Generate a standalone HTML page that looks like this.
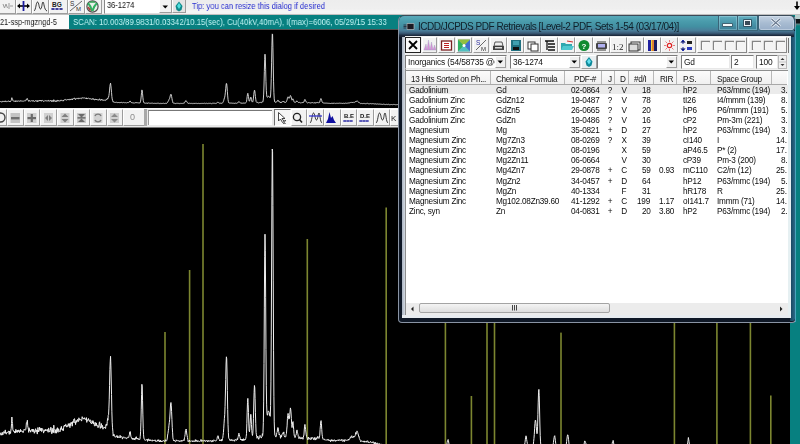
<!DOCTYPE html><html><head><meta charset='utf-8'><style>
*{margin:0;padding:0;box-sizing:border-box}
html,body{width:800px;height:444px;overflow:hidden;background:#000;font-family:"Liberation Sans",sans-serif}
.a{position:absolute}
.t{position:absolute;will-change:transform;white-space:nowrap;font-size:8.2px;line-height:10px;color:#111;letter-spacing:-0.22px}
.b{position:absolute;background:#f2f2f2;border-right:1px solid #9c9c9c;border-bottom:1px solid #9c9c9c;border-left:1px solid #fff;border-top:1px solid #fff}
svg{position:absolute;overflow:visible}
</style></head><body><div class='a' style='left:0;top:0;width:800px;height:15px;background:linear-gradient(180deg,#ededed 0%,#efefef 60%,#f5f5f5 75%,#f3f3f3 92%,#9a9a9a 100%)'></div><div class='b' style='left:-1px;top:-1px;width:17px;height:15px'></div><div class='b' style='left:16px;top:-1px;width:16px;height:15px'></div><div class='b' style='left:32px;top:-1px;width:17px;height:15px'></div><div class='b' style='left:49px;top:-1px;width:19px;height:15px'></div><div class='b' style='left:68px;top:-1px;width:17px;height:15px'></div><div class='b' style='left:85px;top:-1px;width:17px;height:15px'></div><svg style='left:0;top:-1.5px' width='110' height='15'>
<path d='M3,5 L4.5,9 L6,5 L7.5,9 M9,4 L9,10 M10,7 L13,7' stroke='#9a9a9a' stroke-width='1' fill='none'/>
<path d='M18,7 L29,7' stroke='#000' stroke-width='1.6'/><path d='M17,7 L20,4.5 L20,9.5 Z M30,7 L27,4.5 L27,9.5Z' fill='#000'/>
<path d='M23.5,2 L23.5,12' stroke='#1a1aa0' stroke-width='1.8'/>
<path d='M34,12 C36,11 36,3 37.5,3 C39,3 39,10 40.5,10 C42,10 42,3 43,3 C44,3 44,11 47,12' stroke='#222' stroke-width='0.9' fill='none'/>
<text x='52' y='7.5' font-family='Liberation Sans' font-size='6.5' font-weight='bold' fill='#222'>BG</text>
<path d='M51,10 L63,10' stroke='#2020a0' stroke-width='1'/><circle cx='53' cy='10' r='0.9' fill='#202080'/><circle cx='57' cy='10' r='0.9' fill='#202080'/><circle cx='61' cy='10' r='0.9' fill='#202080'/>
<text x='70' y='7' font-family='Liberation Sans' font-size='6.5' fill='#333'>S</text><path d='M70,12 L82,2' stroke='#555' stroke-width='0.9'/>
<text x='76' y='12' font-family='Liberation Sans' font-size='6' fill='#333'>M</text>
<circle cx='92.5' cy='7.5' r='5.6' fill='#e8f0e8' stroke='#505050' stroke-width='1.2'/><path d='M88,4 C90,6 91,8 92,12 M97,4 C95,6 93,9 92.5,12' stroke='#30b060' stroke-width='2'/><path d='M88,8 L90.5,11.5' stroke='#b04040' stroke-width='1.6'/><path d='M90,3 L95,3' stroke='#30a050' stroke-width='1.5'/>
</svg><div class='a' style='left:104px;top:0;width:68px;height:14px;background:#fff;border-left:1px solid #888;border-bottom:1px solid #ddd'></div><div class='t' style='left:107px;top:0px;font-size:8.6px;letter-spacing:0;transform:scaleX(0.866);transform-origin:0 0;color:#111'>36-1274</div><div class='b' style='left:159px;top:-1px;width:13px;height:14px'></div><svg style='left:159px;top:0' width='13' height='14'><path d='M3.5,5.5 L9,5.5 L6.25,8.5Z' fill='#000'/></svg><div class='b' style='left:172px;top:-1px;width:14px;height:14px;background:#e4e4e4'></div><svg style='left:172px;top:0' width='14' height='14'><path d='M7,1.5 L10.5,6 L9.5,10 L7,11.5 L4.5,10 L3.5,6Z' fill='#108a8a'/><path d='M7,3 L9,6 L7,9 L5,6Z' fill='#50e0e0'/></svg><div class='t' style='left:192px;top:0.5px;font-size:9.5px;letter-spacing:0;transform:scaleX(0.801);transform-origin:0 0;color:#2a30d0'>Tip: you can resize this dialog if desired</div><svg style='left:793px;top:1px' width='7' height='10'><path d='M4,0.5 L4,6' stroke='#000' stroke-width='1.6'/><path d='M1,5 L7,5 L4,9Z' fill='#000'/></svg><div class='a' style='left:0;top:15px;width:69px;height:14px;background:#fbfbfb'></div><div class='t' style='left:0;top:16.5px;font-size:9.5px;letter-spacing:0;transform:scaleX(0.77);transform-origin:0 0;color:#1a1a1a'>21-ssp-mgzngd-5</div><div class='a' style='left:69px;top:15px;width:731px;height:14px;background:#078080'></div><div class='t' style='left:73px;top:16.5px;font-size:9.5px;letter-spacing:0;transform:scaleX(0.822);transform-origin:0 0;color:#c0f4f4'>SCAN: 10.003/89.9831/0.03342/10.15(sec), Cu(40kV,40mA), I(max)=6006, 05/29/15 15:33</div><svg style='left:0;top:0' width='800' height='444' viewBox='0 0 800 444'>
<rect x='0' y='29' width='800' height='79' fill='#000'/>
<rect x='0' y='29' width='800' height='0.6' fill='#888'/>
<path d='M0.00,102.1 L0.33,101.6 L0.66,101.4 L0.99,101.8 L1.32,102.0 L1.65,101.7 L1.98,101.5 L2.31,101.3 L2.64,101.9 L2.97,102.0 L3.30,101.4 L3.63,101.4 L3.96,101.1 L4.29,101.3 L4.62,101.6 L4.95,101.6 L5.28,100.8 L5.61,101.6 L5.94,101.7 L6.27,101.8 L6.60,101.4 L6.93,101.4 L7.26,101.5 L7.59,101.4 L7.92,101.3 L8.25,101.1 L8.58,101.0 L8.91,101.3 L9.24,101.8 L9.57,101.1 L9.90,101.7 L10.23,101.3 L10.56,101.6 L10.89,100.8 L11.22,100.4 L11.55,99.2 L11.88,97.7 L12.21,98.8 L12.54,99.2 L12.87,100.7 L13.20,101.0 L13.53,100.9 L13.86,101.2 L14.19,101.1 L14.52,101.2 L14.85,101.5 L15.18,101.0 L15.51,101.5 L15.84,100.6 L16.17,101.4 L16.50,101.0 L16.83,101.2 L17.16,100.9 L17.49,101.4 L17.82,100.9 L18.15,101.2 L18.48,100.8 L18.81,101.0 L19.14,101.1 L19.47,101.4 L19.80,100.9 L20.13,101.0 L20.46,100.6 L20.79,101.3 L21.12,101.0 L21.45,101.0 L21.78,101.0 L22.11,101.1 L22.44,101.1 L22.77,101.3 L23.10,101.4 L23.43,101.2 L23.76,100.9 L24.09,100.6 L24.42,100.8 L24.75,100.8 L25.08,100.8 L25.41,100.8 L25.74,100.8 L26.07,100.1 L26.40,99.0 L26.73,99.0 L27.06,98.9 L27.39,98.5 L27.72,99.8 L28.05,100.2 L28.38,100.6 L28.71,101.4 L29.04,100.2 L29.37,100.5 L29.70,101.0 L30.03,100.8 L30.36,101.0 L30.69,101.3 L31.02,101.1 L31.35,100.9 L31.68,100.6 L32.01,100.8 L32.34,101.0 L32.67,100.6 L33.00,101.3 L33.33,100.7 L33.66,100.6 L33.99,101.1 L34.32,101.6 L34.65,101.3 L34.98,100.9 L35.31,100.8 L35.64,100.5 L35.97,101.3 L36.30,101.0 L36.63,100.8 L36.96,101.0 L37.29,101.8 L37.62,100.7 L37.95,100.2 L38.28,100.6 L38.61,101.3 L38.94,101.1 L39.27,100.9 L39.60,100.1 L39.93,100.7 L40.26,100.9 L40.59,100.4 L40.92,101.0 L41.25,100.3 L41.58,101.2 L41.91,101.1 L42.24,100.7 L42.57,100.4 L42.90,100.7 L43.23,100.8 L43.56,101.5 L43.89,101.2 L44.22,101.1 L44.55,101.1 L44.88,100.7 L45.21,101.0 L45.54,100.6 L45.87,100.9 L46.20,101.0 L46.53,100.9 L46.86,100.7 L47.19,100.6 L47.52,101.1 L47.85,101.0 L48.18,101.3 L48.51,100.3 L48.84,100.4 L49.17,100.9 L49.50,101.0 L49.83,101.3 L50.16,100.8 L50.49,100.8 L50.82,100.1 L51.15,100.8 L51.48,101.1 L51.81,101.7 L52.14,100.4 L52.47,100.8 L52.80,101.4 L53.13,100.8 L53.46,101.4 L53.79,99.7 L54.12,100.5 L54.45,100.6 L54.78,100.9 L55.11,101.6 L55.44,100.9 L55.77,101.4 L56.10,100.6 L56.43,101.5 L56.76,101.1 L57.09,100.4 L57.42,100.3 L57.75,101.2 L58.08,101.3 L58.41,100.5 L58.74,100.5 L59.07,101.1 L59.40,101.0 L59.73,101.0 L60.06,101.2 L60.39,101.0 L60.72,100.3 L61.05,100.4 L61.38,99.9 L61.71,100.6 L62.04,100.6 L62.37,100.8 L62.70,100.5 L63.03,100.9 L63.36,101.0 L63.69,100.1 L64.02,99.8 L64.35,99.9 L64.68,99.6 L65.01,99.8 L65.34,99.9 L65.67,99.4 L66.00,99.5 L66.33,99.8 L66.66,100.1 L66.99,100.1 L67.32,99.7 L67.65,99.7 L67.98,100.0 L68.31,99.3 L68.64,99.7 L68.97,99.5 L69.30,99.3 L69.63,99.9 L69.96,100.2 L70.29,99.3 L70.62,99.7 L70.95,99.0 L71.28,99.3 L71.61,99.0 L71.94,99.0 L72.27,99.9 L72.60,98.8 L72.93,99.1 L73.26,98.9 L73.59,98.7 L73.92,98.2 L74.25,98.1 L74.58,98.1 L74.91,99.1 L75.24,98.8 L75.57,99.5 L75.90,98.8 L76.23,98.5 L76.56,99.0 L76.89,98.6 L77.22,98.5 L77.55,98.3 L77.88,98.8 L78.21,98.8 L78.54,98.8 L78.87,97.9 L79.20,98.1 L79.53,98.5 L79.86,98.3 L80.19,98.3 L80.52,98.3 L80.85,98.4 L81.18,98.4 L81.51,98.7 L81.84,98.4 L82.17,97.6 L82.50,98.0 L82.83,98.1 L83.16,98.2 L83.49,98.0 L83.82,97.9 L84.15,98.2 L84.48,97.9 L84.81,97.9 L85.14,98.2 L85.47,98.3 L85.80,98.4 L86.13,98.5 L86.46,97.8 L86.79,99.0 L87.12,98.3 L87.45,98.5 L87.78,98.5 L88.11,98.3 L88.44,98.0 L88.77,98.4 L89.10,98.6 L89.43,98.8 L89.76,98.7 L90.09,98.3 L90.42,98.8 L90.75,99.1 L91.08,99.2 L91.41,99.2 L91.74,99.4 L92.07,98.6 L92.40,98.9 L92.73,99.1 L93.06,98.6 L93.39,99.4 L93.72,98.9 L94.05,99.0 L94.38,99.8 L94.71,99.9 L95.04,99.7 L95.37,99.1 L95.70,99.0 L96.03,99.9 L96.36,99.1 L96.69,99.6 L97.02,99.7 L97.35,99.8 L97.68,99.7 L98.01,100.2 L98.34,100.0 L98.67,100.1 L99.00,99.5 L99.33,99.0 L99.66,98.8 L99.99,99.9 L100.32,100.4 L100.65,100.0 L100.98,100.2 L101.31,99.2 L101.64,99.7 L101.97,100.2 L102.30,99.7 L102.63,99.8 L102.96,100.6 L103.29,100.3 L103.62,100.2 L103.95,100.1 L104.28,100.1 L104.61,100.3 L104.94,100.1 L105.27,100.4 L105.60,100.4 L105.93,99.5 L106.26,99.7 L106.59,99.4 L106.92,99.7 L107.25,98.8 L107.58,98.0 L107.91,98.5 L108.24,97.3 L108.57,97.2 L108.90,95.6 L109.23,93.4 L109.56,90.1 L109.89,86.4 L110.22,84.4 L110.55,83.2 L110.88,85.5 L111.21,88.9 L111.54,92.4 L111.87,96.5 L112.20,98.9 L112.53,100.3 L112.86,101.1 L113.19,102.2 L113.52,101.9 L113.85,101.7 L114.18,102.0 L114.51,102.3 L114.84,102.4 L115.17,102.3 L115.50,102.5 L115.83,102.4 L116.16,102.4 L116.49,102.4 L116.82,102.1 L117.15,102.4 L117.48,102.7 L117.81,102.2 L118.14,102.6 L118.47,102.5 L118.80,102.5 L119.13,102.5 L119.46,102.7 L119.79,102.5 L120.12,102.1 L120.45,102.6 L120.78,102.5 L121.11,102.3 L121.44,102.4 L121.77,102.4 L122.10,102.4 L122.43,102.9 L122.76,102.8 L123.09,102.6 L123.42,102.5 L123.75,102.4 L124.08,102.6 L124.41,102.7 L124.74,102.7 L125.07,102.7 L125.40,102.7 L125.73,102.6 L126.06,102.8 L126.39,102.9 L126.72,102.9 L127.05,102.5 L127.38,102.5 L127.71,102.6 L128.04,102.6 L128.37,102.6 L128.70,102.6 L129.03,102.2 L129.36,102.0 L129.69,101.3 L130.02,101.2 L130.35,101.2 L130.68,102.0 L131.01,102.4 L131.34,102.6 L131.67,102.6 L132.00,103.0 L132.33,103.0 L132.66,102.7 L132.99,103.0 L133.32,102.8 L133.65,103.0 L133.98,102.9 L134.31,103.2 L134.64,102.8 L134.97,103.0 L135.30,103.0 L135.63,102.6 L135.96,102.8 L136.29,102.4 L136.62,102.9 L136.95,103.0 L137.28,102.9 L137.61,102.7 L137.94,103.0 L138.27,102.9 L138.60,102.9 L138.93,103.1 L139.26,103.0 L139.59,103.0 L139.92,103.0 L140.25,102.3 L140.58,101.2 L140.91,99.1 L141.24,95.8 L141.57,92.4 L141.90,89.9 L142.23,90.6 L142.56,93.7 L142.89,97.2 L143.22,100.4 L143.55,101.9 L143.88,102.7 L144.21,102.9 L144.54,103.0 L144.87,103.1 L145.20,103.3 L145.53,103.2 L145.86,103.2 L146.19,103.2 L146.52,103.1 L146.85,103.1 L147.18,102.9 L147.51,103.5 L147.84,103.1 L148.17,103.2 L148.50,102.9 L148.83,103.1 L149.16,103.4 L149.49,103.1 L149.82,103.3 L150.15,103.1 L150.48,103.4 L150.81,103.2 L151.14,103.2 L151.47,103.2 L151.80,103.3 L152.13,103.5 L152.46,103.2 L152.79,103.1 L153.12,103.3 L153.45,103.4 L153.78,103.3 L154.11,103.2 L154.44,103.3 L154.77,103.3 L155.10,103.1 L155.43,103.5 L155.76,103.4 L156.09,103.6 L156.42,103.4 L156.75,103.4 L157.08,103.5 L157.41,103.4 L157.74,103.1 L158.07,103.4 L158.40,103.4 L158.73,103.1 L159.06,103.4 L159.39,103.6 L159.72,103.4 L160.05,103.5 L160.38,103.2 L160.71,103.6 L161.04,103.5 L161.37,103.6 L161.70,103.4 L162.03,103.5 L162.36,103.4 L162.69,103.5 L163.02,103.5 L163.35,103.3 L163.68,103.3 L164.01,103.4 L164.34,103.5 L164.67,103.5 L165.00,103.4 L165.33,103.1 L165.66,103.5 L165.99,103.5 L166.32,103.4 L166.65,103.4 L166.98,103.1 L167.31,102.7 L167.64,102.0 L167.97,101.6 L168.30,101.0 L168.63,100.5 L168.96,99.6 L169.29,99.0 L169.62,98.4 L169.95,97.2 L170.28,95.8 L170.61,94.6 L170.94,94.2 L171.27,94.9 L171.60,96.4 L171.93,98.3 L172.26,100.2 L172.59,101.3 L172.92,102.7 L173.25,103.1 L173.58,103.1 L173.91,103.4 L174.24,103.2 L174.57,103.4 L174.90,103.4 L175.23,103.5 L175.56,103.6 L175.89,103.5 L176.22,103.1 L176.55,103.3 L176.88,103.3 L177.21,103.3 L177.54,103.3 L177.87,103.3 L178.20,103.4 L178.53,103.4 L178.86,103.3 L179.19,103.5 L179.52,103.6 L179.85,103.4 L180.18,103.5 L180.51,103.3 L180.84,103.5 L181.17,103.5 L181.50,103.5 L181.83,103.2 L182.16,103.4 L182.49,103.4 L182.82,103.4 L183.15,103.4 L183.48,103.2 L183.81,103.1 L184.14,103.3 L184.47,102.6 L184.80,102.3 L185.13,101.8 L185.46,100.9 L185.79,100.9 L186.12,100.6 L186.45,101.0 L186.78,101.7 L187.11,102.1 L187.44,102.6 L187.77,103.0 L188.10,103.5 L188.43,103.4 L188.76,103.4 L189.09,103.5 L189.42,103.2 L189.75,103.4 L190.08,103.5 L190.41,103.4 L190.74,103.5 L191.07,103.5 L191.40,103.4 L191.73,103.4 L192.06,103.5 L192.39,103.4 L192.72,103.6 L193.05,103.3 L193.38,103.5 L193.71,103.4 L194.04,103.5 L194.37,103.5 L194.70,103.4 L195.03,103.6 L195.36,103.1 L195.69,103.4 L196.02,103.4 L196.35,103.5 L196.68,103.2 L197.01,103.2 L197.34,103.4 L197.67,103.6 L198.00,103.5 L198.33,103.3 L198.66,103.5 L198.99,103.6 L199.32,103.6 L199.65,103.5 L199.98,103.4 L200.31,103.5 L200.64,103.4 L200.97,103.0 L201.30,103.2 L201.63,103.5 L201.96,103.4 L202.29,103.4 L202.62,103.4 L202.95,103.3 L203.28,103.4 L203.61,103.4 L203.94,103.4 L204.27,103.4 L204.60,103.2 L204.93,103.3 L205.26,103.6 L205.59,103.4 L205.92,103.5 L206.25,103.3 L206.58,103.3 L206.91,103.3 L207.24,103.4 L207.57,103.6 L207.90,103.3 L208.23,103.3 L208.56,103.3 L208.89,103.5 L209.22,103.3 L209.55,103.4 L209.88,103.4 L210.21,103.3 L210.54,103.3 L210.87,103.5 L211.20,103.6 L211.53,103.7 L211.86,103.4 L212.19,103.2 L212.52,103.3 L212.85,103.6 L213.18,103.4 L213.51,103.3 L213.84,103.1 L214.17,103.2 L214.50,103.3 L214.83,103.3 L215.16,103.5 L215.49,103.4 L215.82,103.4 L216.15,103.4 L216.48,103.2 L216.81,103.1 L217.14,102.8 L217.47,102.3 L217.80,102.2 L218.13,102.2 L218.46,102.5 L218.79,102.9 L219.12,103.0 L219.45,103.1 L219.78,103.4 L220.11,103.1 L220.44,103.3 L220.77,103.2 L221.10,103.3 L221.43,103.4 L221.76,103.0 L222.09,103.3 L222.42,102.9 L222.75,102.7 L223.08,102.1 L223.41,101.4 L223.74,100.4 L224.07,99.2 L224.40,98.0 L224.73,97.2 L225.06,95.2 L225.39,92.2 L225.72,88.8 L226.05,85.1 L226.38,83.4 L226.71,83.8 L227.04,87.0 L227.37,91.4 L227.70,95.9 L228.03,99.5 L228.36,101.4 L228.69,102.7 L229.02,102.9 L229.35,103.0 L229.68,103.1 L230.01,103.3 L230.34,103.1 L230.67,103.2 L231.00,103.4 L231.33,103.3 L231.66,103.0 L231.99,103.3 L232.32,103.2 L232.65,103.3 L232.98,103.4 L233.31,103.3 L233.64,103.2 L233.97,103.2 L234.30,103.2 L234.63,103.5 L234.96,103.0 L235.29,103.1 L235.62,103.1 L235.95,103.0 L236.28,103.2 L236.61,103.3 L236.94,103.1 L237.27,102.8 L237.60,103.1 L237.93,102.6 L238.26,102.3 L238.59,101.8 L238.92,101.6 L239.25,101.8 L239.58,102.2 L239.91,102.4 L240.24,102.8 L240.57,103.1 L240.90,102.9 L241.23,103.2 L241.56,103.0 L241.89,103.3 L242.22,102.9 L242.55,103.3 L242.88,102.9 L243.21,103.3 L243.54,102.9 L243.87,103.1 L244.20,103.3 L244.53,103.1 L244.86,103.0 L245.19,103.1 L245.52,103.0 L245.85,102.7 L246.18,102.3 L246.51,101.7 L246.84,99.3 L247.17,96.5 L247.50,94.2 L247.83,93.3 L248.16,94.7 L248.49,96.6 L248.82,99.4 L249.15,101.0 L249.48,101.2 L249.81,100.5 L250.14,99.2 L250.47,97.9 L250.80,97.1 L251.13,97.7 L251.46,99.5 L251.79,100.9 L252.12,101.7 L252.45,102.1 L252.78,101.7 L253.11,100.3 L253.44,98.1 L253.77,94.6 L254.10,91.9 L254.43,90.2 L254.76,90.7 L255.09,93.3 L255.42,96.6 L255.75,99.2 L256.08,101.4 L256.41,101.9 L256.74,102.4 L257.07,102.8 L257.40,102.6 L257.73,102.2 L258.06,102.4 L258.39,102.7 L258.72,103.0 L259.05,102.7 L259.38,102.7 L259.71,102.5 L260.04,102.1 L260.37,102.4 L260.70,102.4 L261.03,102.6 L261.36,102.7 L261.69,102.4 L262.02,102.4 L262.35,101.7 L262.68,102.1 L263.01,101.4 L263.34,99.0 L263.67,94.1 L264.00,85.0 L264.33,71.5 L264.66,59.6 L264.99,54.2 L265.32,58.0 L265.65,69.2 L265.98,81.6 L266.31,90.3 L266.64,94.8 L266.97,96.8 L267.30,97.3 L267.63,97.2 L267.96,96.6 L268.29,96.3 L268.62,96.4 L268.95,96.5 L269.28,96.7 L269.61,97.4 L269.94,97.4 L270.27,97.5 L270.60,95.0 L270.93,89.3 L271.26,78.4 L271.59,62.2 L271.92,45.2 L272.25,33.9 L272.58,34.5 L272.91,47.3 L273.24,65.1 L273.57,81.8 L273.90,92.7 L274.23,98.9 L274.56,101.0 L274.89,102.0 L275.22,102.1 L275.55,102.4 L275.88,102.5 L276.21,102.3 L276.54,101.8 L276.87,101.4 L277.20,101.3 L277.53,100.5 L277.86,100.2 L278.19,100.3 L278.52,101.1 L278.85,101.2 L279.18,102.0 L279.51,101.8 L279.84,102.0 L280.17,102.1 L280.50,102.8 L280.83,102.1 L281.16,102.1 L281.49,102.5 L281.82,101.9 L282.15,101.9 L282.48,101.6 L282.81,101.5 L283.14,101.5 L283.47,101.6 L283.80,101.2 L284.13,102.1 L284.46,102.2 L284.79,102.5 L285.12,102.5 L285.45,102.4 L285.78,102.4 L286.11,101.9 L286.44,101.6 L286.77,100.6 L287.10,99.8 L287.43,98.1 L287.76,97.3 L288.09,96.8 L288.42,97.4 L288.75,98.2 L289.08,98.1 L289.41,98.1 L289.74,97.2 L290.07,96.3 L290.40,95.5 L290.73,95.9 L291.06,96.7 L291.39,98.1 L291.72,99.5 L292.05,100.2 L292.38,99.6 L292.71,98.9 L293.04,98.8 L293.37,99.8 L293.70,100.6 L294.03,101.7 L294.36,102.2 L294.69,102.4 L295.02,102.6 L295.35,102.4 L295.68,102.1 L296.01,102.0 L296.34,101.7 L296.67,101.0 L297.00,100.8 L297.33,101.3 L297.66,101.6 L297.99,101.9 L298.32,102.4 L298.65,102.5 L298.98,102.9 L299.31,102.5 L299.64,102.4 L299.97,102.7 L300.30,102.8 L300.63,102.9 L300.96,102.6 L301.29,102.7 L301.62,102.9 L301.95,102.5 L302.28,102.6 L302.61,102.6 L302.94,103.0 L303.27,102.6 L303.60,102.2 L303.93,102.0 L304.26,100.8 L304.59,99.9 L304.92,99.4 L305.25,99.9 L305.58,100.6 L305.91,101.3 L306.24,102.0 L306.57,102.3 L306.90,102.5 L307.23,102.8 L307.56,102.9 L307.89,103.1 L308.22,102.7 L308.55,102.5 L308.88,102.9 L309.21,102.9 L309.54,102.7 L309.87,102.8 L310.20,103.1 L310.53,103.0 L310.86,103.0 L311.19,102.6 L311.52,103.0 L311.85,102.7 L312.18,102.6 L312.51,102.6 L312.84,102.7 L313.17,102.7 L313.50,103.1 L313.83,103.0 L314.16,103.0 L314.49,103.0 L314.82,102.5 L315.15,103.2 L315.48,102.9 L315.81,103.1 L316.14,102.7 L316.47,102.7 L316.80,103.0 L317.13,102.5 L317.46,102.6 L317.79,102.3 L318.12,102.4 L318.45,102.7 L318.78,102.8 L319.11,102.8 L319.44,102.5 L319.77,102.0 L320.10,100.6 L320.43,99.7 L320.76,98.7 L321.09,98.6 L321.42,99.3 L321.75,100.6 L322.08,101.8 L322.41,102.3 L322.74,102.8 L323.07,103.0 L323.40,103.0 L323.73,102.9 L324.06,103.0 L324.39,103.0 L324.72,103.2 L325.05,103.1 L325.38,103.2 L325.71,103.1 L326.04,103.2 L326.37,103.2 L326.70,103.1 L327.03,103.2 L327.36,103.2 L327.69,103.2 L328.02,103.0 L328.35,103.2 L328.68,103.3 L329.01,103.1 L329.34,103.3 L329.67,103.3 L330.00,103.2 L330.33,103.4 L330.66,103.6 L330.99,103.1 L331.32,103.0 L331.65,103.4 L331.98,103.3 L332.31,103.1 L332.64,103.5 L332.97,103.3 L333.30,103.4 L333.63,103.2 L333.96,103.5 L334.29,103.1 L334.62,103.2 L334.95,103.2 L335.28,103.3 L335.61,103.5 L335.94,103.2 L336.27,103.4 L336.60,103.2 L336.93,103.3 L337.26,103.3 L337.59,103.3 L337.92,103.1 L338.25,103.1 L338.58,103.4 L338.91,103.2 L339.24,103.1 L339.57,103.2 L339.90,103.3 L340.23,103.3 L340.56,103.3 L340.89,103.1 L341.22,103.3 L341.55,103.2 L341.88,103.0 L342.21,103.4 L342.54,103.4 L342.87,103.5 L343.20,103.5 L343.53,103.2 L343.86,103.2 L344.19,103.1 L344.52,103.5 L344.85,103.4 L345.18,103.1 L345.51,103.2 L345.84,103.2 L346.17,103.2 L346.50,103.3 L346.83,103.3 L347.16,103.3 L347.49,103.1 L347.82,103.2 L348.15,103.1 L348.48,102.9 L348.81,103.2 L349.14,103.1 L349.47,102.9 L349.80,102.9 L350.13,102.8 L350.46,102.4 L350.79,102.6 L351.12,102.6 L351.45,102.4 L351.78,102.1 L352.11,102.6 L352.44,102.5 L352.77,102.5 L353.10,102.6 L353.43,102.2 L353.76,102.4 L354.09,102.5 L354.42,102.3 L354.75,102.4 L355.08,102.2 L355.41,101.9 L355.74,101.4 L356.07,101.8 L356.40,101.3 L356.73,101.1 L357.06,101.2 L357.39,101.1 L357.72,101.4 L358.05,101.7 L358.38,102.0 L358.71,102.3 L359.04,102.3 L359.37,102.9 L359.70,102.9 L360.03,103.1 L360.36,103.3 L360.69,103.6 L361.02,103.4 L361.35,103.4 L361.68,103.4 L362.01,103.3 L362.34,103.5 L362.67,103.6 L363.00,103.5 L363.33,103.4 L363.66,103.6 L363.99,103.7 L364.32,103.7 L364.65,103.4 L364.98,103.4 L365.31,103.7 L365.64,103.6 L365.97,103.5 L366.30,103.4 L366.63,103.7 L366.96,103.7 L367.29,103.5 L367.62,103.3 L367.95,103.5 L368.28,103.8 L368.61,103.6 L368.94,103.7 L369.27,103.7 L369.60,103.8 L369.93,103.8 L370.26,103.7 L370.59,103.5 L370.92,103.7 L371.25,103.7 L371.58,103.8 L371.91,103.9 L372.24,103.8 L372.57,103.6 L372.90,103.7 L373.23,103.6 L373.56,103.8 L373.89,103.9 L374.22,104.1 L374.55,103.8 L374.88,104.1 L375.21,103.7 L375.54,104.0 L375.87,103.9 L376.20,104.1 L376.53,104.0 L376.86,104.1 L377.19,103.8 L377.52,104.0 L377.85,104.2 L378.18,104.3 L378.51,104.1 L378.84,104.1 L379.17,104.2 L379.50,104.0 L379.83,104.1 L380.16,104.1 L380.49,104.2 L380.82,104.2 L381.15,104.2 L381.48,104.4 L381.81,104.1 L382.14,104.2 L382.47,104.5 L382.80,104.2 L383.13,104.1 L383.46,104.3 L383.79,104.1 L384.12,104.4 L384.45,104.3 L384.78,104.5 L385.11,104.5 L385.44,104.6 L385.77,104.5 L386.10,104.4 L386.43,104.4 L386.76,104.3 L387.09,104.4 L387.42,104.6 L387.75,104.4 L388.08,104.5 L388.41,104.3 L388.74,104.3 L389.07,104.4 L389.40,104.7 L389.73,104.7 L390.06,104.6 L390.39,104.7 L390.72,104.5 L391.05,104.5 L391.38,104.5 L391.71,104.6 L392.04,104.7 L392.37,104.7 L392.70,104.6 L393.03,104.4 L393.36,104.4 L393.69,104.5 L394.02,104.6 L394.35,104.5 L394.68,104.5 L395.01,104.4 L395.34,104.5 L395.67,104.8 L396.00,104.5 L396.33,104.6 L396.66,104.7 L396.99,104.5 L397.32,104.6 L397.65,104.6 L397.98,104.8 L398.31,104.6 L398.64,104.5 L398.97,104.6 L399.30,104.8 L399.63,104.6 L399.96,104.5 L400.29,104.6 L400.62,104.6 L400.95,104.7 L401.28,104.7 L401.61,104.6 L401.94,104.7 L402.27,104.6 L402.60,104.2 L402.93,104.5 L403.26,104.6 L403.59,104.8 L403.92,104.6 L404.25,104.5 L404.58,104.7 L404.91,104.7 L405.24,104.9 L405.57,104.6 L405.90,104.7 L406.23,104.5 L406.56,104.5 L406.89,104.7 L407.22,104.5 L407.55,104.6 L407.88,104.7 L408.21,104.7 L408.54,104.8 L408.87,104.5 L409.20,104.5 L409.53,104.8 L409.86,104.5 L410.19,104.7 L410.52,104.8 L410.85,104.5 L411.18,104.8 L411.51,104.5 L411.84,104.6 L412.17,104.5 L412.50,104.6 L412.83,104.5 L413.16,104.6 L413.49,104.6 L413.82,104.6 L414.15,104.5 L414.48,104.7 L414.81,104.5 L415.14,104.5 L415.47,104.7 L415.80,104.6 L416.13,104.7 L416.46,104.7 L416.79,104.6 L417.12,104.7 L417.45,104.8 L417.78,104.7 L418.11,104.6 L418.44,104.6 L418.77,104.6 L419.10,104.9 L419.43,104.5 L419.76,104.7 L420.09,104.8 L420.42,104.7 L420.75,104.6 L421.08,104.6 L421.41,104.7 L421.74,104.6 L422.07,104.9 L422.40,104.6 L422.73,104.7 L423.06,104.7 L423.39,104.6 L423.72,104.4 L424.05,104.5 L424.38,104.8 L424.71,104.5 L425.04,104.7 L425.37,104.7 L425.70,104.8 L426.03,104.6 L426.36,104.6 L426.69,104.7 L427.02,104.7 L427.35,104.7 L427.68,104.7 L428.01,104.6 L428.34,104.8 L428.67,104.7 L429.00,104.7 L429.33,104.8 L429.66,104.7 L429.99,104.9 L430.32,104.6 L430.65,104.6 L430.98,104.7 L431.31,104.5 L431.64,104.8 L431.97,104.6 L432.30,104.6 L432.63,104.8 L432.96,104.7 L433.29,104.6 L433.62,104.7 L433.95,104.7 L434.28,104.5 L434.61,104.7 L434.94,104.9 L435.27,104.8 L435.60,104.6 L435.93,104.7 L436.26,104.8 L436.59,105.0 L436.92,104.7 L437.25,104.5 L437.58,104.9 L437.91,105.0 L438.24,104.6 L438.57,104.8 L438.90,104.7 L439.23,104.7 L439.56,104.8 L439.89,104.7 L440.22,104.6 L440.55,104.7 L440.88,104.8 L441.21,104.6 L441.54,104.7 L441.87,104.6 L442.20,104.8 L442.53,104.6 L442.86,104.6 L443.19,104.5 L443.52,104.7 L443.85,104.7 L444.18,104.8 L444.51,104.6 L444.84,104.6 L445.17,104.6 L445.50,104.8 L445.83,104.8 L446.16,104.6 L446.49,104.5 L446.82,104.3 L447.15,103.8 L447.48,103.3 L447.81,103.2 L448.14,103.1 L448.47,103.4 L448.80,103.9 L449.13,104.2 L449.46,104.5 L449.79,104.5 L450.12,104.6 L450.45,104.7 L450.78,104.6 L451.11,104.8 L451.44,104.7 L451.77,104.5 L452.10,104.7 L452.43,104.6 L452.76,105.0 L453.09,105.0 L453.42,104.8 L453.75,104.6 L454.08,104.5 L454.41,104.8 L454.74,104.9 L455.07,104.9 L455.40,104.9 L455.73,104.7 L456.06,104.8 L456.39,104.5 L456.72,104.7 L457.05,104.8 L457.38,104.7 L457.71,104.8 L458.04,104.6 L458.37,104.6 L458.70,104.8 L459.03,104.6 L459.36,104.7 L459.69,104.8 L460.02,104.7 L460.35,104.7 L460.68,104.8 L461.01,104.8 L461.34,104.6 L461.67,104.8 L462.00,104.8 L462.33,104.7 L462.66,104.9 L462.99,104.8 L463.32,104.9 L463.65,104.8 L463.98,105.0 L464.31,104.9 L464.64,104.6 L464.97,104.8 L465.30,104.9 L465.63,104.5 L465.96,104.8 L466.29,104.6 L466.62,104.8 L466.95,105.0 L467.28,104.5 L467.61,104.8 L467.94,104.7 L468.27,104.6 L468.60,104.9 L468.93,104.8 L469.26,104.8 L469.59,104.7 L469.92,104.8 L470.25,104.9 L470.58,104.8 L470.91,104.7 L471.24,104.8 L471.57,104.7 L471.90,104.8 L472.23,104.8 L472.56,104.7 L472.89,104.8 L473.22,104.6 L473.55,104.7 L473.88,104.7 L474.21,104.7 L474.54,104.8 L474.87,104.9 L475.20,104.6 L475.53,104.6 L475.86,104.8 L476.19,104.8 L476.52,104.8 L476.85,104.6 L477.18,104.8 L477.51,104.9 L477.84,104.8 L478.17,104.9 L478.50,104.8 L478.83,104.9 L479.16,104.9 L479.49,104.6 L479.82,104.7 L480.15,105.0 L480.48,104.9 L480.81,104.9 L481.14,104.8 L481.47,105.0 L481.80,104.7 L482.13,105.0 L482.46,104.7 L482.79,104.7 L483.12,104.8 L483.45,104.9 L483.78,104.8 L484.11,104.8 L484.44,105.1 L484.77,105.0 L485.10,104.7 L485.43,104.8 L485.76,104.9 L486.09,104.9 L486.42,104.9 L486.75,104.9 L487.08,104.5 L487.41,105.0 L487.74,104.6 L488.07,104.7 L488.40,104.8 L488.73,104.8 L489.06,104.9 L489.39,104.6 L489.72,104.7 L490.05,104.8 L490.38,104.8 L490.71,104.8 L491.04,105.0 L491.37,104.9 L491.70,104.9 L492.03,104.7 L492.36,104.7 L492.69,105.1 L493.02,104.9 L493.35,104.7 L493.68,105.0 L494.01,105.0 L494.34,104.7 L494.67,104.8 L495.00,104.9 L495.33,105.0 L495.66,104.8 L495.99,104.9 L496.32,104.8 L496.65,104.8 L496.98,104.7 L497.31,104.9 L497.64,104.9 L497.97,104.8 L498.30,104.8 L498.63,104.8 L498.96,104.9 L499.29,104.9 L499.62,104.9 L499.95,104.9 L500.28,104.8 L500.61,104.7 L500.94,104.9 L501.27,104.8 L501.60,104.8 L501.93,104.8 L502.26,104.8 L502.59,104.9 L502.92,104.8 L503.25,104.8 L503.58,105.3 L503.91,104.8 L504.24,104.8 L504.57,104.6 L504.90,105.0 L505.23,104.8 L505.56,104.8 L505.89,105.0 L506.22,104.7 L506.55,104.8 L506.88,104.9 L507.21,105.0 L507.54,104.9 L507.87,104.5 L508.20,104.6 L508.53,105.2 L508.86,105.1 L509.19,104.8 L509.52,104.9 L509.85,104.9 L510.18,104.8 L510.51,104.8 L510.84,104.8 L511.17,104.8 L511.50,105.0 L511.83,104.7 L512.16,104.9 L512.49,104.7 L512.82,104.7 L513.15,104.8 L513.48,104.8 L513.81,104.8 L514.14,105.1 L514.47,104.9 L514.80,104.8 L515.13,105.0 L515.46,105.0 L515.79,104.7 L516.12,104.7 L516.45,105.0 L516.78,104.8 L517.11,104.8 L517.44,104.7 L517.77,104.9 L518.10,104.9 L518.43,104.9 L518.76,104.8 L519.09,104.9 L519.42,104.9 L519.75,104.9 L520.08,104.9 L520.41,104.8 L520.74,105.0 L521.07,105.0 L521.40,105.0 L521.73,104.7 L522.06,104.9 L522.39,104.8 L522.72,104.7 L523.05,104.9 L523.38,104.7 L523.71,104.7 L524.04,104.7 L524.37,104.6 L524.70,104.1 L525.03,103.7 L525.36,103.0 L525.69,102.5 L526.02,102.2 L526.35,102.4 L526.68,103.1 L527.01,103.5 L527.34,104.0 L527.67,104.5 L528.00,104.8 L528.33,104.7 L528.66,105.1 L528.99,104.9 L529.32,104.8 L529.65,104.6 L529.98,104.9 L530.31,104.6 L530.64,104.5 L530.97,104.6 L531.30,105.1 L531.63,104.7 L531.96,104.8 L532.29,104.7 L532.62,104.8 L532.95,104.7 L533.28,104.3 L533.61,103.6 L533.94,102.8 L534.27,101.9 L534.60,100.5 L534.93,99.3 L535.26,98.5 L535.59,98.4 L535.92,99.0 L536.25,100.0 L536.58,101.0 L536.91,101.7 L537.24,101.6 L537.57,100.0 L537.90,97.0 L538.23,94.1 L538.56,91.8 L538.89,91.1 L539.22,92.6 L539.55,95.8 L539.88,99.4 L540.21,102.1 L540.54,103.6 L540.87,104.5 L541.20,104.8 L541.53,104.7 L541.86,105.0 L542.19,104.9 L542.52,104.9 L542.85,104.8 L543.18,104.9 L543.51,104.9 L543.84,105.0 L544.17,104.9 L544.50,104.8 L544.83,104.9 L545.16,105.2 L545.49,104.8 L545.82,104.8 L546.15,105.0 L546.48,104.9 L546.81,105.2 L547.14,105.1 L547.47,104.7 L547.80,104.6 L548.13,104.6 L548.46,104.9 L548.79,104.8 L549.12,104.7 L549.45,105.0 L549.78,104.6 L550.11,104.9 L550.44,104.8 L550.77,105.0 L551.10,104.8 L551.43,104.8 L551.76,104.7 L552.09,105.0 L552.42,104.7 L552.75,104.4 L553.08,104.5 L553.41,103.8 L553.74,103.1 L554.07,102.6 L554.40,102.3 L554.73,102.1 L555.06,102.6 L555.39,103.4 L555.72,104.0 L556.05,104.6 L556.38,104.7 L556.71,104.5 L557.04,104.7 L557.37,105.0 L557.70,105.1 L558.03,104.9 L558.36,104.8 L558.69,104.9 L559.02,104.9 L559.35,104.8 L559.68,104.7 L560.01,104.8 L560.34,104.7 L560.67,105.0 L561.00,104.8 L561.33,104.8 L561.66,105.0 L561.99,104.7 L562.32,105.0 L562.65,105.0 L562.98,104.5 L563.31,104.7 L563.64,104.8 L563.97,104.7 L564.30,104.7 L564.63,105.0 L564.96,104.8 L565.29,104.6 L565.62,104.8 L565.95,104.5 L566.28,104.3 L566.61,103.5 L566.94,102.9 L567.27,102.2 L567.60,101.9 L567.93,102.0 L568.26,102.4 L568.59,103.1 L568.92,103.9 L569.25,104.5 L569.58,104.6 L569.91,104.7 L570.24,104.7 L570.57,104.9 L570.90,104.9 L571.23,104.8 L571.56,104.6 L571.89,104.8 L572.22,104.8 L572.55,105.0 L572.88,104.9 L573.21,104.7 L573.54,104.7 L573.87,104.7 L574.20,105.1 L574.53,104.7 L574.86,105.0 L575.19,104.8 L575.52,105.2 L575.85,104.9 L576.18,105.0 L576.51,104.7 L576.84,104.8 L577.17,104.7 L577.50,104.9 L577.83,104.6 L578.16,104.9 L578.49,104.6 L578.82,104.9 L579.15,105.0 L579.48,104.7 L579.81,104.9 L580.14,104.8 L580.47,105.0 L580.80,104.9 L581.13,104.8 L581.46,104.9 L581.79,104.8 L582.12,105.1 L582.45,104.7 L582.78,104.9 L583.11,104.6 L583.44,104.7 L583.77,104.5 L584.10,104.1 L584.43,103.7 L584.76,103.4 L585.09,103.5 L585.42,103.7 L585.75,103.9 L586.08,104.2 L586.41,104.8 L586.74,104.8 L587.07,104.9 L587.40,104.6 L587.73,104.7 L588.06,104.7 L588.39,104.8 L588.72,105.0 L589.05,104.7 L589.38,104.9 L589.71,104.9 L590.04,104.6 L590.37,105.0 L590.70,104.7 L591.03,104.8 L591.36,105.0 L591.69,104.8 L592.02,104.9 L592.35,104.8 L592.68,104.9 L593.01,105.0 L593.34,104.5 L593.67,104.9 L594.00,104.7 L594.33,104.8 L594.66,104.7 L594.99,105.0 L595.32,105.0 L595.65,105.3 L595.98,104.7 L596.31,104.8 L596.64,105.0 L596.97,104.7 L597.30,104.8 L597.63,104.4 L597.96,104.8 L598.29,104.7 L598.62,104.8 L598.95,104.7 L599.28,104.8 L599.61,104.9 L599.94,104.7 L600.27,104.7 L600.60,105.0 L600.93,105.0 L601.26,104.8 L601.59,104.6 L601.92,104.9 L602.25,105.1 L602.58,104.7 L602.91,104.7 L603.24,104.6 L603.57,104.8 L603.90,104.6 L604.23,104.9 L604.56,104.7 L604.89,104.8 L605.22,105.0 L605.55,104.9 L605.88,104.7 L606.21,104.7 L606.54,104.9 L606.87,104.7 L607.20,104.7 L607.53,104.7 L607.86,104.8 L608.19,104.8 L608.52,104.9 L608.85,104.8 L609.18,104.8 L609.51,104.9 L609.84,104.9 L610.17,104.8 L610.50,104.8 L610.83,104.7 L611.16,104.9 L611.49,104.6 L611.82,104.3 L612.15,104.1 L612.48,103.6 L612.81,103.5 L613.14,103.3 L613.47,103.7 L613.80,104.1 L614.13,104.2 L614.46,104.3 L614.79,105.0 L615.12,104.8 L615.45,104.8 L615.78,104.7 L616.11,104.6 L616.44,104.9 L616.77,105.0 L617.10,104.7 L617.43,104.7 L617.76,104.8 L618.09,104.8 L618.42,104.9 L618.75,104.5 L619.08,105.0 L619.41,105.0 L619.74,104.7 L620.07,104.8 L620.40,104.7 L620.73,104.8 L621.06,104.6 L621.39,104.6 L621.72,104.9 L622.05,104.7 L622.38,105.0 L622.71,105.1 L623.04,104.7 L623.37,104.9 L623.70,105.1 L624.03,104.8 L624.36,104.9 L624.69,104.8 L625.02,104.8 L625.35,104.9 L625.68,104.9 L626.01,104.7 L626.34,105.0 L626.67,104.8 L627.00,105.0 L627.33,104.8 L627.66,104.6 L627.99,104.8 L628.32,104.7 L628.65,104.8 L628.98,105.0 L629.31,104.9 L629.64,104.8 L629.97,104.8 L630.30,104.9 L630.63,104.8 L630.96,104.9 L631.29,104.8 L631.62,104.8 L631.95,105.0 L632.28,104.7 L632.61,104.8 L632.94,104.8 L633.27,104.8 L633.60,105.1 L633.93,105.0 L634.26,105.0 L634.59,104.7 L634.92,104.9 L635.25,104.8 L635.58,105.0 L635.91,104.9 L636.24,104.9 L636.57,104.7 L636.90,105.1 L637.23,104.9 L637.56,104.8 L637.89,104.8 L638.22,104.8 L638.55,104.7 L638.88,104.8 L639.21,105.0 L639.54,104.8 L639.87,104.9 L640.20,104.9 L640.53,104.6 L640.86,104.5 L641.19,104.6 L641.52,104.8 L641.85,104.9 L642.18,104.9 L642.51,104.6 L642.84,104.8 L643.17,105.0 L643.50,104.6 L643.83,104.8 L644.16,104.7 L644.49,104.8 L644.82,105.1 L645.15,104.9 L645.48,104.9 L645.81,104.9 L646.14,104.6 L646.47,104.9 L646.80,104.9 L647.13,104.8 L647.46,104.8 L647.79,105.0 L648.12,105.0 L648.45,105.2 L648.78,104.8 L649.11,104.9 L649.44,104.8 L649.77,105.0 L650.10,104.8 L650.43,105.0 L650.76,105.0 L651.09,104.8 L651.42,104.8 L651.75,104.8 L652.08,104.8 L652.41,104.9 L652.74,104.7 L653.07,104.7 L653.40,104.9 L653.73,105.0 L654.06,104.8 L654.39,104.8 L654.72,105.0 L655.05,104.5 L655.38,105.1 L655.71,104.9 L656.04,104.8 L656.37,104.7 L656.70,105.1 L657.03,104.9 L657.36,104.6 L657.69,104.7 L658.02,104.9 L658.35,104.8 L658.68,105.0 L659.01,104.8 L659.34,105.0 L659.67,105.1 L660.00,105.0 L660.33,104.8 L660.66,105.0 L660.99,104.7 L661.32,104.7 L661.65,104.7 L661.98,104.8 L662.31,104.7 L662.64,104.8 L662.97,104.7 L663.30,104.8 L663.63,104.7 L663.96,105.0 L664.29,104.9 L664.62,105.0 L664.95,104.7 L665.28,104.8 L665.61,104.9 L665.94,105.0 L666.27,104.9 L666.60,104.7 L666.93,104.9 L667.26,104.9 L667.59,104.9 L667.92,104.9 L668.25,104.6 L668.58,104.9 L668.91,104.9 L669.24,104.6 L669.57,104.7 L669.90,105.0 L670.23,104.7 L670.56,105.0 L670.89,104.8 L671.22,105.2 L671.55,105.0 L671.88,104.7 L672.21,104.9 L672.54,104.9 L672.87,104.8 L673.20,104.8 L673.53,104.9 L673.86,104.9 L674.19,104.6 L674.52,104.6 L674.85,104.8 L675.18,105.0 L675.51,104.9 L675.84,104.9 L676.17,104.8 L676.50,104.6 L676.83,104.9 L677.16,104.8 L677.49,104.9 L677.82,104.8 L678.15,104.9 L678.48,104.8 L678.81,104.7 L679.14,104.9 L679.47,104.9 L679.80,104.8 L680.13,105.0 L680.46,104.6 L680.79,105.0 L681.12,104.9 L681.45,105.0 L681.78,104.6 L682.11,104.9 L682.44,104.9 L682.77,104.6 L683.10,104.9 L683.43,104.9 L683.76,104.8 L684.09,104.8 L684.42,104.9 L684.75,104.9 L685.08,104.9 L685.41,104.7 L685.74,104.7 L686.07,104.7 L686.40,104.8 L686.73,104.7 L687.06,104.7 L687.39,104.3 L687.72,103.9 L688.05,103.3 L688.38,102.6 L688.71,103.0 L689.04,103.5 L689.37,104.2 L689.70,104.6 L690.03,104.9 L690.36,105.0 L690.69,105.1 L691.02,104.8 L691.35,104.9 L691.68,104.5 L692.01,104.7 L692.34,105.0 L692.67,104.7 L693.00,104.8 L693.33,104.7 L693.66,105.0 L693.99,104.7 L694.32,104.7 L694.65,104.9 L694.98,104.9 L695.31,104.9 L695.64,104.8 L695.97,104.5 L696.30,104.6 L696.63,104.6 L696.96,104.9 L697.29,104.9 L697.62,104.8 L697.95,104.9 L698.28,104.9 L698.61,104.9 L698.94,104.7 L699.27,104.8 L699.60,104.8 L699.93,104.9 L700.26,104.9 L700.59,104.9 L700.92,104.7 L701.25,104.8 L701.58,104.6 L701.91,104.9 L702.24,104.7 L702.57,105.0 L702.90,104.9 L703.23,104.8 L703.56,104.9 L703.89,104.9 L704.22,105.0 L704.55,104.9 L704.88,104.9 L705.21,104.8 L705.54,104.9 L705.87,105.0 L706.20,104.9 L706.53,104.8 L706.86,105.0 L707.19,104.8 L707.52,104.7 L707.85,104.9 L708.18,104.8 L708.51,104.8 L708.84,104.9 L709.17,104.7 L709.50,104.5 L709.83,105.0 L710.16,104.6 L710.49,104.9 L710.82,104.6 L711.15,105.1 L711.48,104.7 L711.81,104.8 L712.14,105.0 L712.47,104.9 L712.80,105.0 L713.13,105.0 L713.46,104.8 L713.79,104.9 L714.12,105.2 L714.45,104.9 L714.78,104.8 L715.11,104.8 L715.44,104.6 L715.77,105.1 L716.10,104.8 L716.43,104.8 L716.76,104.7 L717.09,105.0 L717.42,105.0 L717.75,104.9 L718.08,104.8 L718.41,105.1 L718.74,104.8 L719.07,104.8 L719.40,104.7 L719.73,105.2 L720.06,104.8 L720.39,105.0 L720.72,104.9 L721.05,104.7 L721.38,104.6 L721.71,104.8 L722.04,104.9 L722.37,104.7 L722.70,105.0 L723.03,104.9 L723.36,104.9 L723.69,105.0 L724.02,104.8 L724.35,104.6 L724.68,104.8 L725.01,104.8 L725.34,104.8 L725.67,104.7 L726.00,104.8 L726.33,105.0 L726.66,104.8 L726.99,104.6 L727.32,104.8 L727.65,104.7 L727.98,104.8 L728.31,104.6 L728.64,104.8 L728.97,104.8 L729.30,104.9 L729.63,104.7 L729.96,104.9 L730.29,105.0 L730.62,104.8 L730.95,105.0 L731.28,104.6 L731.61,104.7 L731.94,104.8 L732.27,104.7 L732.60,105.2 L732.93,104.6 L733.26,104.9 L733.59,104.7 L733.92,104.5 L734.25,105.0 L734.58,104.9 L734.91,104.8 L735.24,104.8 L735.57,105.1 L735.90,105.0 L736.23,104.6 L736.56,104.9 L736.89,104.8 L737.22,105.0 L737.55,105.0 L737.88,105.1 L738.21,104.8 L738.54,104.7 L738.87,104.8 L739.20,104.9 L739.53,104.8 L739.86,104.8 L740.19,104.9 L740.52,104.8 L740.85,104.6 L741.18,104.5 L741.51,104.9 L741.84,105.0 L742.17,104.6 L742.50,104.7 L742.83,104.7 L743.16,104.8 L743.49,104.9 L743.82,104.7 L744.15,104.7 L744.48,104.7 L744.81,105.0 L745.14,104.7 L745.47,104.9 L745.80,104.9 L746.13,104.8 L746.46,104.9 L746.79,104.5 L747.12,104.8 L747.45,104.8 L747.78,104.9 L748.11,104.8 L748.44,104.9 L748.77,104.8 L749.10,104.7 L749.43,104.7 L749.76,105.0 L750.09,104.9 L750.42,104.8 L750.75,105.0 L751.08,104.8 L751.41,104.9 L751.74,104.8 L752.07,104.8 L752.40,104.9 L752.73,104.6 L753.06,104.7 L753.39,104.9 L753.72,104.8 L754.05,104.7 L754.38,104.9 L754.71,104.9 L755.04,104.7 L755.37,105.2 L755.70,105.0 L756.03,104.8 L756.36,104.8 L756.69,105.0 L757.02,104.7 L757.35,104.5 L757.68,104.8 L758.01,104.8 L758.34,104.8 L758.67,105.0 L759.00,104.8 L759.33,104.8 L759.66,104.7 L759.99,104.6 L760.32,104.8 L760.65,104.8 L760.98,104.8 L761.31,104.6 L761.64,105.0 L761.97,104.8 L762.30,104.9 L762.63,104.8 L762.96,104.7 L763.29,104.8 L763.62,104.7 L763.95,104.8 L764.28,104.9 L764.61,104.9 L764.94,105.0 L765.27,104.8 L765.60,104.9 L765.93,104.7 L766.26,104.7 L766.59,105.0 L766.92,105.0 L767.25,104.8 L767.58,105.0 L767.91,104.8 L768.24,104.8 L768.57,104.9 L768.90,104.6 L769.23,104.9 L769.56,104.8 L769.89,104.9 L770.22,105.2 L770.55,104.9 L770.88,104.9 L771.21,104.8 L771.54,104.9 L771.87,104.9 L772.20,104.9 L772.53,104.9 L772.86,104.7 L773.19,104.9 L773.52,104.7 L773.85,104.7 L774.18,104.9 L774.51,104.7 L774.84,105.1 L775.17,104.8 L775.50,105.0 L775.83,104.8 L776.16,104.7 L776.49,104.8 L776.82,104.9 L777.15,104.7 L777.48,104.9 L777.81,104.9 L778.14,104.7 L778.47,104.8 L778.80,105.0 L779.13,104.8 L779.46,104.7 L779.79,104.9 L780.12,104.9 L780.45,104.8 L780.78,104.8 L781.11,104.9 L781.44,104.7 L781.77,105.0 L782.10,104.8 L782.43,104.6 L782.76,105.0 L783.09,104.8 L783.42,105.1 L783.75,104.9 L784.08,105.0 L784.41,104.8 L784.74,104.9 L785.07,104.6 L785.40,105.0 L785.73,104.8 L786.06,104.8 L786.39,104.8 L786.72,104.7 L787.05,105.0 L787.38,104.5 L787.71,104.9 L788.04,104.9 L788.37,105.1 L788.70,104.9 L789.03,105.1 L789.36,104.8 L789.69,104.9 L790.02,104.8 L790.35,104.9 L790.68,104.8 L791.01,104.5 L791.34,104.7 L791.67,104.8' fill='none' stroke='#e6e6e6' stroke-width='0.9'/>
<rect x='164.2' y='332' width='1.6' height='112' fill='#7c8630'/><rect x='188.8' y='270' width='1.6' height='174' fill='#7c8630'/><rect x='202.2' y='144' width='1.6' height='300' fill='#7c8630'/><rect x='306.5' y='239' width='1.6' height='205' fill='#7c8630'/><rect x='385.4' y='207.5' width='1.6' height='236.5' fill='#7c8630'/><rect x='444.6' y='140' width='1.6' height='304' fill='#7c8630'/><rect x='470.6' y='396' width='1.6' height='48' fill='#7c8630'/><rect x='486.2' y='140' width='1.6' height='304' fill='#7c8630'/><rect x='493.7' y='140' width='1.6' height='304' fill='#7c8630'/><rect x='560.2' y='332.6' width='1.6' height='111.39999999999998' fill='#7c8630'/><rect x='673.6' y='140' width='1.6' height='304' fill='#7c8630'/><rect x='716.1' y='140' width='1.6' height='304' fill='#7c8630'/><rect x='749.6' y='140' width='1.6' height='304' fill='#7c8630'/><rect x='770.0' y='395.5' width='1.6' height='48.5' fill='#7c8630'/><path d='M0.00,435.3 L0.33,433.5 L0.66,432.8 L0.99,434.4 L1.32,435.2 L1.65,433.7 L1.98,433.1 L2.31,432.3 L2.64,434.9 L2.97,434.9 L3.30,432.5 L3.63,432.7 L3.96,431.4 L4.29,432.0 L4.62,433.2 L4.95,433.3 L5.28,429.9 L5.61,433.2 L5.94,433.8 L6.27,434.1 L6.60,432.6 L6.93,432.4 L7.26,433.0 L7.59,432.6 L7.92,432.1 L8.25,431.5 L8.58,430.9 L8.91,432.0 L9.24,434.4 L9.57,431.2 L9.90,433.8 L10.23,432.1 L10.56,433.3 L10.89,430.0 L11.22,428.3 L11.55,423.4 L11.88,417.0 L12.21,421.7 L12.54,423.5 L12.87,429.8 L13.20,430.7 L13.53,430.5 L13.86,431.8 L14.19,431.3 L14.52,431.6 L14.85,433.1 L15.18,431.0 L15.51,432.8 L15.84,429.3 L16.17,432.4 L16.50,430.8 L16.83,431.7 L17.16,430.4 L17.49,432.4 L17.82,430.3 L18.15,431.8 L18.48,429.9 L18.81,430.7 L19.14,431.4 L19.47,432.6 L19.80,430.5 L20.13,430.9 L20.46,429.3 L20.79,432.0 L21.12,430.7 L21.45,430.7 L21.78,431.0 L22.11,431.1 L22.44,431.1 L22.77,432.2 L23.10,432.7 L23.43,431.9 L23.76,430.5 L24.09,429.3 L24.42,430.0 L24.75,429.8 L25.08,430.1 L25.41,430.0 L25.74,429.8 L26.07,427.1 L26.40,422.6 L26.73,422.4 L27.06,422.0 L27.39,420.2 L27.72,425.8 L28.05,427.6 L28.38,429.2 L28.71,432.4 L29.04,427.7 L29.37,428.6 L29.70,430.8 L30.03,430.0 L30.36,430.8 L30.69,432.2 L31.02,431.1 L31.35,430.4 L31.68,429.4 L32.01,430.0 L32.34,430.8 L32.67,429.0 L33.00,432.0 L33.33,429.8 L33.66,429.3 L33.99,431.3 L34.32,433.3 L34.65,432.1 L34.98,430.5 L35.31,430.1 L35.64,428.7 L35.97,432.2 L36.30,430.8 L36.63,429.9 L36.96,431.0 L37.29,434.1 L37.62,429.6 L37.95,427.5 L38.28,429.3 L38.61,432.0 L38.94,431.3 L39.27,430.4 L39.60,427.2 L39.93,429.8 L40.26,430.5 L40.59,428.5 L40.92,430.8 L41.25,428.0 L41.58,431.6 L41.91,431.3 L42.24,429.6 L42.57,428.6 L42.90,429.6 L43.23,430.1 L43.56,433.1 L43.89,431.5 L44.22,431.4 L44.55,431.3 L44.88,429.7 L45.21,431.0 L45.54,429.4 L45.87,430.4 L46.20,430.9 L46.53,430.3 L46.86,429.8 L47.19,429.2 L47.52,431.1 L47.85,430.7 L48.18,432.3 L48.51,428.1 L48.84,428.3 L49.17,430.6 L49.50,431.0 L49.83,432.1 L50.16,430.1 L50.49,430.0 L50.82,427.2 L51.15,429.9 L51.48,431.4 L51.81,433.8 L52.14,428.2 L52.47,430.0 L52.80,432.5 L53.13,430.0 L53.46,432.5 L53.79,425.2 L54.12,428.6 L54.45,429.4 L54.78,430.4 L55.11,433.2 L55.44,430.3 L55.77,432.4 L56.10,429.3 L56.43,433.2 L56.76,431.4 L57.09,428.4 L57.42,427.7 L57.75,431.8 L58.08,432.3 L58.41,428.8 L58.74,428.8 L59.07,431.4 L59.40,431.0 L59.73,431.0 L60.06,431.7 L60.39,430.8 L60.72,427.9 L61.05,428.5 L61.38,426.4 L61.71,429.3 L62.04,429.2 L62.37,430.2 L62.70,428.8 L63.03,430.4 L63.36,430.8 L63.69,427.1 L64.02,425.8 L64.35,426.3 L64.68,425.0 L65.01,425.7 L65.34,426.2 L65.67,424.3 L66.00,424.5 L66.33,425.7 L66.66,427.0 L66.99,427.2 L67.32,425.6 L67.65,425.6 L67.98,426.5 L68.31,423.7 L68.64,425.4 L68.97,424.6 L69.30,423.5 L69.63,426.3 L69.96,427.7 L70.29,423.7 L70.62,425.5 L70.95,422.5 L71.28,423.7 L71.61,422.5 L71.94,422.5 L72.27,426.2 L72.60,421.6 L72.93,422.9 L73.26,422.3 L73.59,421.1 L73.92,419.0 L74.25,418.7 L74.58,418.7 L74.91,422.9 L75.24,421.8 L75.57,424.6 L75.90,421.5 L76.23,420.4 L76.56,422.3 L76.89,420.7 L77.22,420.6 L77.55,419.4 L77.88,421.8 L78.21,421.7 L78.54,421.5 L78.87,417.8 L79.20,418.6 L79.53,420.2 L79.86,419.6 L80.19,419.6 L80.52,419.4 L80.85,419.9 L81.18,419.9 L81.51,421.1 L81.84,420.1 L82.17,416.7 L82.50,418.2 L82.83,418.7 L83.16,419.0 L83.49,418.5 L83.82,417.9 L84.15,419.2 L84.48,417.9 L84.81,417.7 L85.14,419.2 L85.47,419.4 L85.80,419.9 L86.13,420.2 L86.46,417.6 L86.79,422.4 L87.12,419.7 L87.45,420.3 L87.78,420.6 L88.11,419.7 L88.44,418.5 L88.77,420.2 L89.10,420.7 L89.43,421.5 L89.76,421.0 L90.09,419.7 L90.42,421.8 L90.75,423.1 L91.08,423.5 L91.41,423.4 L91.74,424.0 L92.07,420.7 L92.40,421.9 L92.73,423.0 L93.06,420.7 L93.39,424.0 L93.72,422.2 L94.05,422.3 L94.38,425.8 L94.71,426.1 L95.04,425.3 L95.37,422.8 L95.70,422.4 L96.03,426.1 L96.36,423.0 L96.69,425.2 L97.02,425.3 L97.35,425.6 L97.68,425.4 L98.01,427.7 L98.34,426.6 L98.67,427.1 L99.00,424.8 L99.33,422.6 L99.66,421.8 L99.99,426.3 L100.32,428.4 L100.65,426.6 L100.98,427.5 L101.31,423.5 L101.64,425.6 L101.97,427.6 L102.30,425.3 L102.63,426.0 L102.96,429.2 L103.29,427.8 L103.62,427.5 L103.95,427.2 L104.28,427.2 L104.61,427.9 L104.94,427.2 L105.27,428.3 L105.60,428.6 L105.93,424.6 L106.26,425.4 L106.59,424.1 L106.92,425.3 L107.25,421.5 L107.58,418.5 L107.91,420.2 L108.24,415.4 L108.57,414.8 L108.90,408.1 L109.23,399.2 L109.56,385.3 L109.89,369.7 L110.22,361.3 L110.55,356.3 L110.88,365.9 L111.21,380.0 L111.54,394.7 L111.87,411.8 L112.20,422.2 L112.53,427.8 L112.86,431.2 L113.19,436.1 L113.52,434.8 L113.85,434.0 L114.18,434.9 L114.51,436.3 L114.84,436.7 L115.17,436.5 L115.50,437.3 L115.83,436.6 L116.16,436.6 L116.49,436.6 L116.82,435.5 L117.15,436.8 L117.48,437.9 L117.81,435.8 L118.14,437.7 L118.47,437.2 L118.80,437.0 L119.13,437.2 L119.46,437.8 L119.79,437.3 L120.12,435.3 L120.45,437.7 L120.78,437.3 L121.11,436.4 L121.44,436.8 L121.77,436.8 L122.10,436.8 L122.43,439.1 L122.76,438.3 L123.09,437.6 L123.42,437.3 L123.75,436.8 L124.08,437.5 L124.41,438.1 L124.74,437.9 L125.07,438.2 L125.40,437.9 L125.73,437.6 L126.06,438.3 L126.39,438.7 L126.72,438.8 L127.05,437.4 L127.38,437.3 L127.71,437.5 L128.04,437.6 L128.37,437.5 L128.70,437.6 L129.03,435.9 L129.36,434.9 L129.69,432.0 L130.02,431.5 L130.35,431.7 L130.68,435.0 L131.01,436.8 L131.34,437.7 L131.67,437.5 L132.00,439.1 L132.33,439.3 L132.66,438.1 L132.99,439.4 L133.32,438.4 L133.65,439.1 L133.98,438.8 L134.31,440.0 L134.64,438.4 L134.97,439.2 L135.30,439.5 L135.63,437.6 L135.96,438.5 L136.29,436.7 L136.62,438.7 L136.95,439.2 L137.28,439.0 L137.61,438.1 L137.94,439.1 L138.27,438.9 L138.60,438.8 L138.93,439.8 L139.26,439.1 L139.59,439.4 L139.92,439.4 L140.25,436.3 L140.58,431.8 L140.91,422.8 L141.24,409.2 L141.57,394.7 L141.90,384.3 L142.23,387.0 L142.56,400.2 L142.89,414.9 L143.22,428.3 L143.55,434.8 L143.88,438.0 L144.21,439.1 L144.54,439.5 L144.87,439.6 L145.20,440.4 L145.53,440.0 L145.86,440.1 L146.19,439.9 L146.52,439.7 L146.85,439.5 L147.18,439.0 L147.51,441.4 L147.84,439.7 L148.17,440.1 L148.50,438.8 L148.83,439.5 L149.16,441.0 L149.49,439.9 L149.82,440.4 L150.15,439.6 L150.48,440.8 L150.81,440.3 L151.14,440.3 L151.47,440.3 L151.80,440.6 L152.13,441.3 L152.46,440.1 L152.79,439.8 L153.12,440.4 L153.45,441.0 L153.78,440.4 L154.11,440.2 L154.44,440.6 L154.77,440.6 L155.10,439.8 L155.43,441.2 L155.76,440.9 L156.09,441.7 L156.42,441.1 L156.75,441.1 L157.08,441.3 L157.41,441.2 L157.74,439.8 L158.07,440.9 L158.40,440.9 L158.73,439.7 L159.06,441.0 L159.39,441.9 L159.72,440.8 L160.05,441.5 L160.38,440.1 L160.71,441.7 L161.04,441.3 L161.37,441.9 L161.70,440.9 L162.03,441.6 L162.36,441.0 L162.69,441.2 L163.02,441.3 L163.35,440.5 L163.68,440.5 L164.01,441.0 L164.34,441.5 L164.67,441.6 L165.00,440.8 L165.33,439.7 L165.66,441.2 L165.99,441.3 L166.32,441.0 L166.65,440.8 L166.98,439.9 L167.31,438.0 L167.64,435.0 L167.97,433.3 L168.30,430.8 L168.63,428.7 L168.96,425.2 L169.29,422.7 L169.62,419.8 L169.95,415.0 L170.28,409.0 L170.61,403.9 L170.94,402.5 L171.27,405.2 L171.60,411.7 L171.93,419.4 L172.26,427.3 L172.59,432.2 L172.92,437.9 L173.25,439.6 L173.58,439.7 L173.91,441.0 L174.24,440.2 L174.57,441.0 L174.90,440.9 L175.23,441.2 L175.56,441.8 L175.89,441.5 L176.22,439.8 L176.55,440.6 L176.88,440.7 L177.21,440.5 L177.54,440.7 L177.87,440.4 L178.20,441.1 L178.53,441.1 L178.86,440.5 L179.19,441.2 L179.52,441.7 L179.85,441.1 L180.18,441.3 L180.51,440.7 L180.84,441.4 L181.17,441.6 L181.50,441.2 L181.83,440.1 L182.16,441.0 L182.49,440.9 L182.82,441.0 L183.15,440.8 L183.48,440.3 L183.81,439.7 L184.14,440.6 L184.47,437.7 L184.80,436.5 L185.13,434.3 L185.46,430.5 L185.79,430.4 L186.12,429.0 L186.45,430.8 L186.78,434.0 L187.11,435.6 L187.44,437.5 L187.77,439.5 L188.10,441.6 L188.43,440.9 L188.76,441.0 L189.09,441.6 L189.42,440.0 L189.75,441.1 L190.08,441.2 L190.41,441.2 L190.74,441.4 L191.07,441.4 L191.40,440.9 L191.73,440.8 L192.06,441.3 L192.39,441.0 L192.72,441.8 L193.05,440.7 L193.38,441.4 L193.71,440.9 L194.04,441.5 L194.37,441.3 L194.70,440.9 L195.03,441.7 L195.36,439.6 L195.69,441.0 L196.02,441.0 L196.35,441.4 L196.68,440.1 L197.01,440.2 L197.34,440.8 L197.67,441.8 L198.00,441.3 L198.33,440.7 L198.66,441.3 L198.99,441.7 L199.32,441.7 L199.65,441.4 L199.98,441.0 L200.31,441.3 L200.64,441.0 L200.97,439.4 L201.30,440.0 L201.63,441.5 L201.96,440.8 L202.29,440.9 L202.62,441.0 L202.95,440.4 L203.28,441.1 L203.61,441.1 L203.94,441.1 L204.27,440.9 L204.60,440.2 L204.93,440.4 L205.26,441.6 L205.59,441.1 L205.92,441.3 L206.25,440.4 L206.58,440.7 L206.91,440.3 L207.24,440.9 L207.57,441.9 L207.90,440.6 L208.23,440.7 L208.56,440.5 L208.89,441.5 L209.22,440.7 L209.55,441.1 L209.88,441.1 L210.21,440.6 L210.54,440.5 L210.87,441.2 L211.20,441.7 L211.53,442.1 L211.86,441.0 L212.19,440.1 L212.52,440.7 L212.85,441.9 L213.18,441.1 L213.51,440.4 L213.84,439.7 L214.17,440.0 L214.50,440.4 L214.83,440.5 L215.16,441.2 L215.49,440.9 L215.82,440.8 L216.15,440.9 L216.48,440.1 L216.81,439.7 L217.14,438.2 L217.47,436.4 L217.80,435.8 L218.13,435.8 L218.46,437.0 L218.79,439.0 L219.12,439.3 L219.45,439.7 L219.78,440.9 L220.11,439.8 L220.44,440.7 L220.77,440.3 L221.10,440.6 L221.43,441.1 L221.76,439.2 L222.09,440.6 L222.42,438.7 L222.75,438.1 L223.08,435.3 L223.41,432.5 L223.74,428.2 L224.07,423.2 L224.40,418.3 L224.73,414.7 L225.06,406.5 L225.39,394.0 L225.72,379.4 L226.05,364.0 L226.38,356.8 L226.71,358.8 L227.04,372.0 L227.37,390.5 L227.70,409.5 L228.03,424.5 L228.36,432.4 L228.69,437.9 L229.02,438.8 L229.35,439.1 L229.68,439.9 L230.01,440.5 L230.34,439.6 L230.67,440.1 L231.00,440.9 L231.33,440.4 L231.66,439.4 L231.99,440.4 L232.32,440.1 L232.65,440.4 L232.98,441.1 L233.31,440.4 L233.64,440.0 L233.97,440.0 L234.30,440.2 L234.63,441.3 L234.96,439.5 L235.29,439.7 L235.62,439.5 L235.95,439.4 L236.28,440.3 L236.61,440.3 L236.94,439.7 L237.27,438.6 L237.60,439.7 L237.93,437.7 L238.26,436.5 L238.59,434.4 L238.92,433.2 L239.25,434.4 L239.58,436.1 L239.91,436.8 L240.24,438.3 L240.57,439.9 L240.90,439.0 L241.23,440.0 L241.56,439.4 L241.89,440.5 L242.22,439.1 L242.55,440.5 L242.88,439.0 L243.21,440.6 L243.54,438.7 L243.87,439.7 L244.20,440.4 L244.53,439.5 L244.86,439.1 L245.19,439.9 L245.52,439.4 L245.85,438.2 L246.18,436.5 L246.51,433.7 L246.84,423.7 L247.17,412.1 L247.50,402.4 L247.83,398.4 L248.16,404.3 L248.49,412.5 L248.82,424.0 L249.15,430.9 L249.48,431.8 L249.81,428.7 L250.14,423.3 L250.47,417.9 L250.80,414.3 L251.13,417.1 L251.46,424.7 L251.79,430.4 L252.12,433.7 L252.45,435.5 L252.78,433.8 L253.11,428.1 L253.44,418.5 L253.77,404.0 L254.10,392.5 L254.43,385.5 L254.76,387.8 L255.09,398.5 L255.42,412.3 L255.75,423.5 L256.08,432.4 L256.41,434.8 L256.74,436.7 L257.07,438.3 L257.40,437.7 L257.73,436.0 L258.06,436.9 L258.39,437.9 L258.72,439.3 L259.05,438.0 L259.38,437.9 L259.71,437.2 L260.04,435.4 L260.37,436.6 L260.70,436.9 L261.03,437.8 L261.36,437.9 L261.69,436.9 L262.02,436.9 L262.35,433.7 L262.68,435.5 L263.01,432.6 L263.34,422.3 L263.67,401.9 L264.00,363.7 L264.33,307.1 L264.66,256.8 L264.99,234.2 L265.32,250.3 L265.65,297.2 L265.98,349.4 L266.31,385.8 L266.64,404.9 L266.97,413.2 L267.30,415.3 L267.63,415.0 L267.96,412.4 L268.29,410.9 L268.62,411.4 L268.95,411.8 L269.28,412.6 L269.61,415.6 L269.94,415.6 L270.27,416.3 L270.60,405.5 L270.93,381.9 L271.26,335.9 L271.59,268.0 L271.92,196.3 L272.25,149.0 L272.58,151.7 L272.91,205.4 L273.24,280.1 L273.57,350.2 L273.90,396.2 L274.23,421.9 L274.56,431.0 L274.89,435.0 L275.22,435.6 L275.55,436.6 L275.88,437.1 L276.21,436.2 L276.54,434.3 L276.87,432.5 L277.20,432.2 L277.53,428.9 L277.86,427.5 L278.19,427.9 L278.52,431.3 L278.85,431.9 L279.18,435.0 L279.51,434.2 L279.84,435.0 L280.17,435.4 L280.50,438.3 L280.83,435.5 L281.16,435.4 L281.49,437.1 L281.82,434.7 L282.15,434.6 L282.48,433.5 L282.81,432.8 L283.14,433.0 L283.47,433.6 L283.80,431.9 L284.13,435.5 L284.46,436.0 L284.79,437.0 L285.12,437.0 L285.45,436.9 L285.78,436.9 L286.11,434.5 L286.44,433.6 L286.77,429.1 L287.10,425.9 L287.43,418.7 L287.76,415.3 L288.09,413.4 L288.42,415.6 L288.75,419.0 L289.08,418.7 L289.41,418.7 L289.74,414.8 L290.07,411.2 L290.40,407.9 L290.73,409.4 L291.06,413.0 L291.39,418.7 L291.72,424.7 L292.05,427.6 L292.38,425.0 L292.71,422.0 L293.04,421.6 L293.37,425.9 L293.70,429.4 L294.03,433.7 L294.36,436.1 L294.69,436.8 L295.02,437.6 L295.35,436.9 L295.68,435.5 L296.01,435.2 L296.34,433.8 L296.67,430.9 L297.00,429.9 L297.33,432.2 L297.66,433.3 L297.99,434.5 L298.32,436.6 L298.65,437.3 L298.98,438.7 L299.31,437.2 L299.64,436.7 L299.97,438.1 L300.30,438.6 L300.63,438.9 L300.96,437.4 L301.29,438.0 L301.62,438.7 L301.95,437.3 L302.28,437.6 L302.61,437.7 L302.94,439.3 L303.27,437.7 L303.60,436.0 L303.93,435.0 L304.26,430.0 L304.59,426.1 L304.92,424.4 L305.25,426.3 L305.58,429.4 L305.91,432.0 L306.24,434.9 L306.57,436.5 L306.90,437.3 L307.23,438.5 L307.56,438.8 L307.89,439.8 L308.22,438.0 L308.55,437.0 L308.88,438.9 L309.21,438.9 L309.54,438.2 L309.87,438.4 L310.20,439.6 L310.53,439.2 L310.86,439.5 L311.19,437.4 L311.52,439.2 L311.85,438.2 L312.18,437.5 L312.51,437.6 L312.84,437.9 L313.17,437.8 L313.50,439.7 L313.83,439.1 L314.16,439.4 L314.49,439.2 L314.82,437.3 L315.15,440.1 L315.48,438.7 L315.81,439.8 L316.14,438.2 L316.47,438.2 L316.80,439.1 L317.13,437.1 L317.46,437.7 L317.79,436.3 L318.12,436.9 L318.45,437.9 L318.78,438.4 L319.11,438.4 L319.44,437.2 L319.77,435.1 L320.10,429.4 L320.43,425.6 L320.76,421.4 L321.09,420.6 L321.42,423.7 L321.75,429.4 L322.08,434.2 L322.41,436.4 L322.74,438.6 L323.07,439.4 L323.40,439.3 L323.73,438.9 L324.06,439.2 L324.39,439.2 L324.72,440.0 L325.05,439.8 L325.38,440.1 L325.71,439.8 L326.04,440.2 L326.37,440.0 L326.70,439.9 L327.03,439.9 L327.36,440.0 L327.69,440.1 L328.02,439.1 L328.35,440.1 L328.68,440.5 L329.01,439.8 L329.34,440.6 L329.67,440.6 L330.00,440.0 L330.33,440.9 L330.66,441.8 L330.99,439.9 L331.32,439.5 L331.65,441.0 L331.98,440.6 L332.31,439.8 L332.64,441.2 L332.97,440.6 L333.30,440.8 L333.63,440.2 L333.96,441.2 L334.29,439.7 L334.62,440.2 L334.95,440.0 L335.28,440.4 L335.61,441.4 L335.94,440.3 L336.27,440.9 L336.60,440.2 L336.93,440.7 L337.26,440.4 L337.59,440.4 L337.92,439.8 L338.25,439.9 L338.58,440.8 L338.91,440.3 L339.24,439.5 L339.57,440.0 L339.90,440.7 L340.23,440.4 L340.56,440.5 L340.89,439.8 L341.22,440.4 L341.55,440.2 L341.88,439.2 L342.21,441.2 L342.54,441.0 L342.87,441.4 L343.20,441.3 L343.53,440.0 L343.86,440.3 L344.19,439.6 L344.52,441.6 L344.85,441.0 L345.18,439.7 L345.51,439.9 L345.84,440.0 L346.17,440.0 L346.50,440.4 L346.83,440.4 L347.16,440.4 L347.49,439.8 L347.82,440.3 L348.15,439.9 L348.48,439.0 L348.81,440.2 L349.14,439.7 L349.47,438.7 L349.80,438.8 L350.13,438.4 L350.46,436.8 L350.79,437.4 L351.12,437.6 L351.45,436.6 L351.78,435.7 L352.11,437.6 L352.44,437.4 L352.77,437.0 L353.10,437.5 L353.43,436.0 L353.76,436.9 L354.09,437.2 L354.42,436.4 L354.75,436.6 L355.08,435.8 L355.41,434.6 L355.74,432.5 L356.07,434.3 L356.40,432.2 L356.73,431.3 L357.06,431.6 L357.39,431.3 L357.72,432.7 L358.05,433.8 L358.38,435.0 L358.71,436.5 L359.04,436.2 L359.37,438.7 L359.70,439.0 L360.03,439.8 L360.36,440.5 L360.69,441.7 L361.02,441.0 L361.35,440.9 L361.68,441.0 L362.01,440.7 L362.34,441.4 L362.67,441.7 L363.00,441.2 L363.33,441.1 L363.66,442.0 L363.99,442.4 L364.32,442.1 L364.65,441.0 L364.98,441.1 L365.31,442.2 L365.64,441.7 L365.97,441.3 L366.30,441.1 L366.63,442.2 L366.96,442.1 L367.29,441.2 L367.62,440.7 L367.95,441.2 L368.28,442.7 L368.61,441.9 L368.94,442.4 L369.27,442.3 L369.60,442.6 L369.93,442.6 L370.26,442.4 L370.59,441.4 L370.92,442.1 L371.25,442.3 L371.58,442.5 L371.91,443.0 L372.24,442.8 L372.57,442.0 L372.90,442.3 L373.23,441.7 L373.56,442.7 L373.89,442.9 L374.22,443.8 L374.55,442.7 L374.88,443.9 L375.21,442.2 L375.54,443.5 L375.87,443.2 L376.20,444.0 L376.53,443.6 L376.86,443.9 L377.19,442.8 L377.52,443.4 L377.85,444.2 L378.18,444.7 L378.51,443.7 L378.84,444.0 L379.17,444.4 L379.50,443.6 L379.83,444.1 L380.16,444.0 L380.49,444.4 L380.82,444.5 L381.15,444.5 L381.48,445.2 L381.81,444.0 L382.14,444.2 L382.47,445.4 L382.80,444.5 L383.13,444.0 L383.46,444.6 L383.79,444.0 L384.12,445.0 L384.45,444.9 L384.78,445.7 L385.11,445.5 L385.44,446.1 L385.77,445.6 L386.10,445.1 L386.43,445.0 L386.76,444.7 L387.09,445.3 L387.42,446.0 L387.75,445.3 L388.08,445.7 L388.41,444.7 L388.74,444.7 L389.07,445.3 L389.40,446.5 L389.73,446.2 L390.06,445.9 L390.39,446.4 L390.72,445.7 L391.05,445.6 L391.38,445.6 L391.71,445.9 L392.04,446.5 L392.37,446.5 L392.70,446.1 L393.03,445.3 L393.36,445.2 L393.69,445.5 L394.02,445.8 L394.35,445.7 L394.68,445.6 L395.01,445.3 L395.34,445.6 L395.67,446.9 L396.00,445.5 L396.33,445.8 L396.66,446.3 L396.99,445.8 L397.32,445.9 L397.65,446.1 L397.98,447.0 L398.31,446.0 L398.64,445.8 L398.97,446.1 L399.30,447.0 L399.63,445.8 L399.96,445.7 L400.29,446.0 L400.62,445.9 L400.95,446.3 L401.28,446.5 L401.61,445.8 L401.94,446.3 L402.27,446.0 L402.60,444.3 L402.93,445.7 L403.26,446.0 L403.59,447.0 L403.92,446.1 L404.25,445.7 L404.58,446.5 L404.91,446.3 L405.24,447.4 L405.57,445.8 L405.90,446.5 L406.23,445.8 L406.56,445.4 L406.89,446.2 L407.22,445.6 L407.55,446.0 L407.88,446.3 L408.21,446.3 L408.54,446.6 L408.87,445.5 L409.20,445.7 L409.53,446.7 L409.86,445.7 L410.19,446.6 L410.52,447.0 L410.85,445.5 L411.18,446.9 L411.51,445.5 L411.84,446.1 L412.17,445.7 L412.50,445.9 L412.83,445.6 L413.16,446.0 L413.49,445.9 L413.82,446.1 L414.15,445.6 L414.48,446.4 L414.81,445.7 L415.14,445.4 L415.47,446.3 L415.80,446.0 L416.13,446.5 L416.46,446.4 L416.79,446.1 L417.12,446.4 L417.45,446.7 L417.78,446.3 L418.11,446.2 L418.44,446.1 L418.77,445.9 L419.10,447.2 L419.43,445.5 L419.76,446.4 L420.09,446.7 L420.42,446.5 L420.75,446.0 L421.08,445.8 L421.41,446.5 L421.74,446.2 L422.07,447.2 L422.40,446.2 L422.73,446.4 L423.06,446.5 L423.39,445.8 L423.72,445.3 L424.05,445.7 L424.38,446.7 L424.71,445.5 L425.04,446.5 L425.37,446.3 L425.70,446.6 L426.03,446.1 L426.36,446.0 L426.69,446.3 L427.02,446.5 L427.35,446.4 L427.68,446.6 L428.01,445.8 L428.34,446.6 L428.67,446.4 L429.00,446.5 L429.33,446.8 L429.66,446.5 L429.99,447.2 L430.32,446.1 L430.65,446.1 L430.98,446.5 L431.31,445.5 L431.64,446.8 L431.97,446.1 L432.30,446.1 L432.63,446.7 L432.96,446.5 L433.29,445.9 L433.62,446.4 L433.95,446.2 L434.28,445.6 L434.61,446.3 L434.94,447.3 L435.27,446.8 L435.60,446.0 L435.93,446.5 L436.26,447.0 L436.59,447.5 L436.92,446.2 L437.25,445.6 L437.58,447.1 L437.91,447.6 L438.24,446.2 L438.57,446.7 L438.90,446.6 L439.23,446.6 L439.56,446.9 L439.89,446.2 L440.22,446.0 L440.55,446.3 L440.88,446.8 L441.21,445.9 L441.54,446.5 L441.87,446.2 L442.20,447.0 L442.53,446.1 L442.86,446.1 L443.19,445.8 L443.52,446.5 L443.85,446.2 L444.18,446.8 L444.51,446.0 L444.84,446.1 L445.17,445.9 L445.50,446.7 L445.83,447.0 L446.16,446.1 L446.49,445.5 L446.82,444.7 L447.15,442.5 L447.48,440.7 L447.81,440.0 L448.14,439.5 L448.47,440.8 L448.80,443.1 L449.13,444.4 L449.46,445.5 L449.79,445.6 L450.12,445.8 L450.45,446.4 L450.78,446.0 L451.11,447.0 L451.44,446.6 L451.77,445.7 L452.10,446.3 L452.43,446.0 L452.76,447.6 L453.09,447.5 L453.42,447.0 L453.75,446.0 L454.08,445.7 L454.41,446.9 L454.74,447.1 L455.07,447.1 L455.40,447.1 L455.73,446.3 L456.06,446.8 L456.39,445.6 L456.72,446.2 L457.05,447.0 L457.38,446.5 L457.71,446.7 L458.04,446.2 L458.37,446.1 L458.70,446.8 L459.03,446.1 L459.36,446.3 L459.69,446.7 L460.02,446.5 L460.35,446.3 L460.68,446.8 L461.01,447.0 L461.34,446.0 L461.67,446.6 L462.00,447.0 L462.33,446.4 L462.66,447.5 L462.99,446.6 L463.32,447.4 L463.65,446.9 L463.98,447.6 L464.31,447.1 L464.64,446.2 L464.97,446.8 L465.30,447.3 L465.63,445.7 L465.96,447.0 L466.29,445.9 L466.62,447.0 L466.95,447.5 L467.28,445.7 L467.61,446.9 L467.94,446.3 L468.27,446.1 L468.60,447.4 L468.93,446.7 L469.26,447.0 L469.59,446.4 L469.92,446.7 L470.25,447.4 L470.58,446.7 L470.91,446.3 L471.24,446.9 L471.57,446.4 L471.90,447.0 L472.23,446.8 L472.56,446.6 L472.89,446.7 L473.22,446.1 L473.55,446.2 L473.88,446.3 L474.21,446.4 L474.54,446.7 L474.87,447.4 L475.20,446.2 L475.53,445.8 L475.86,446.7 L476.19,446.9 L476.52,446.8 L476.85,446.1 L477.18,446.6 L477.51,447.3 L477.84,446.9 L478.17,447.2 L478.50,446.9 L478.83,447.3 L479.16,447.3 L479.49,446.0 L479.82,446.2 L480.15,447.7 L480.48,447.3 L480.81,447.1 L481.14,447.0 L481.47,447.6 L481.80,446.4 L482.13,447.7 L482.46,446.5 L482.79,446.5 L483.12,447.0 L483.45,447.2 L483.78,446.8 L484.11,446.8 L484.44,448.0 L484.77,447.5 L485.10,446.6 L485.43,446.9 L485.76,447.1 L486.09,447.4 L486.42,447.3 L486.75,447.3 L487.08,445.4 L487.41,447.6 L487.74,446.1 L488.07,446.6 L488.40,446.8 L488.73,446.8 L489.06,447.1 L489.39,446.0 L489.72,446.6 L490.05,446.9 L490.38,447.0 L490.71,446.8 L491.04,447.5 L491.37,447.1 L491.70,447.3 L492.03,446.6 L492.36,446.6 L492.69,447.9 L493.02,447.1 L493.35,446.4 L493.68,447.6 L494.01,447.6 L494.34,446.4 L494.67,447.0 L495.00,447.2 L495.33,447.6 L495.66,446.9 L495.99,447.3 L496.32,446.8 L496.65,446.7 L496.98,446.6 L497.31,447.1 L497.64,447.3 L497.97,447.0 L498.30,447.0 L498.63,446.9 L498.96,447.3 L499.29,447.1 L499.62,447.3 L499.95,447.3 L500.28,446.9 L500.61,446.4 L500.94,447.3 L501.27,446.7 L501.60,446.8 L501.93,446.9 L502.26,446.6 L502.59,447.3 L502.92,446.7 L503.25,446.8 L503.58,448.9 L503.91,446.8 L504.24,446.7 L504.57,445.9 L504.90,447.6 L505.23,446.9 L505.56,446.8 L505.89,447.5 L506.22,446.3 L506.55,446.8 L506.88,447.4 L507.21,447.6 L507.54,447.2 L507.87,445.7 L508.20,445.8 L508.53,448.3 L508.86,448.0 L509.19,446.6 L509.52,447.1 L509.85,447.3 L510.18,446.7 L510.51,446.9 L510.84,446.8 L511.17,446.9 L511.50,447.6 L511.83,446.3 L512.16,447.2 L512.49,446.4 L512.82,446.6 L513.15,447.0 L513.48,446.9 L513.81,447.0 L514.14,448.0 L514.47,447.2 L514.80,446.8 L515.13,447.9 L515.46,447.8 L515.79,446.4 L516.12,446.6 L516.45,447.8 L516.78,446.7 L517.11,447.0 L517.44,446.5 L517.77,447.2 L518.10,447.1 L518.43,447.4 L518.76,446.9 L519.09,447.1 L519.42,447.3 L519.75,447.2 L520.08,447.4 L520.41,446.7 L520.74,447.6 L521.07,447.8 L521.40,447.5 L521.73,446.4 L522.06,447.3 L522.39,446.6 L522.72,446.6 L523.05,447.3 L523.38,446.5 L523.71,446.5 L524.04,446.5 L524.37,446.0 L524.70,444.1 L525.03,442.4 L525.36,439.2 L525.69,437.1 L526.02,435.8 L526.35,436.8 L526.68,439.7 L527.01,441.6 L527.34,443.6 L527.67,445.7 L528.00,446.9 L528.33,446.6 L528.66,448.3 L528.99,447.3 L529.32,446.7 L529.65,445.9 L529.98,447.4 L530.31,446.2 L530.64,445.7 L530.97,446.0 L531.30,448.3 L531.63,446.4 L531.96,446.8 L532.29,446.3 L532.62,446.7 L532.95,446.3 L533.28,444.8 L533.61,441.7 L533.94,438.5 L534.27,434.5 L534.60,428.8 L534.93,423.6 L535.26,420.5 L535.59,420.1 L535.92,422.6 L536.25,426.7 L536.58,430.9 L536.91,433.8 L537.24,433.3 L537.57,426.8 L537.90,414.3 L538.23,402.1 L538.56,392.1 L538.89,389.4 L539.22,395.8 L539.55,409.0 L539.88,424.0 L540.21,435.3 L540.54,441.9 L540.87,445.5 L541.20,446.7 L541.53,446.6 L541.86,447.5 L542.19,447.4 L542.52,447.1 L542.85,447.0 L543.18,447.4 L543.51,447.4 L543.84,447.6 L544.17,447.4 L544.50,446.7 L544.83,447.1 L545.16,448.7 L545.49,446.7 L545.82,447.0 L546.15,447.5 L546.48,447.1 L546.81,448.7 L547.14,447.9 L547.47,446.4 L547.80,445.8 L548.13,445.8 L548.46,447.4 L548.79,447.0 L549.12,446.6 L549.45,447.7 L549.78,446.0 L550.11,447.4 L550.44,446.8 L550.77,447.6 L551.10,446.8 L551.43,447.0 L551.76,446.4 L552.09,447.5 L552.42,446.6 L552.75,445.0 L553.08,445.4 L553.41,442.5 L553.74,439.8 L554.07,437.8 L554.40,436.2 L554.73,435.7 L555.06,437.8 L555.39,440.8 L555.72,443.4 L556.05,445.9 L556.38,446.3 L556.71,445.8 L557.04,446.3 L557.37,447.7 L557.70,448.1 L558.03,447.4 L558.36,446.9 L558.69,447.3 L559.02,447.2 L559.35,446.8 L559.68,446.5 L560.01,446.9 L560.34,446.3 L560.67,447.8 L561.00,446.7 L561.33,446.8 L561.66,447.8 L561.99,446.3 L562.32,447.9 L562.65,447.8 L562.98,445.5 L563.31,446.3 L563.64,446.8 L563.97,446.3 L564.30,446.4 L564.63,447.6 L564.96,446.7 L565.29,446.1 L565.62,446.6 L565.95,445.8 L566.28,444.6 L566.61,441.5 L566.94,439.0 L567.27,436.1 L567.60,434.8 L567.93,435.0 L568.26,436.7 L568.59,439.7 L568.92,443.1 L569.25,445.6 L569.58,446.0 L569.91,446.5 L570.24,446.2 L570.57,447.3 L570.90,447.2 L571.23,446.7 L571.56,446.2 L571.89,447.0 L572.22,447.0 L572.55,447.5 L572.88,447.2 L573.21,446.5 L573.54,446.5 L573.87,446.4 L574.20,447.9 L574.53,446.5 L574.86,447.5 L575.19,446.7 L575.52,448.3 L575.85,447.1 L576.18,447.5 L576.51,446.3 L576.84,446.9 L577.17,446.3 L577.50,447.2 L577.83,445.9 L578.16,447.2 L578.49,445.9 L578.82,447.3 L579.15,447.5 L579.48,446.5 L579.81,447.2 L580.14,447.0 L580.47,447.7 L580.80,447.2 L581.13,446.9 L581.46,447.4 L581.79,446.8 L582.12,448.3 L582.45,446.5 L582.78,447.1 L583.11,445.8 L583.44,446.3 L583.77,445.5 L584.10,444.1 L584.43,442.2 L584.76,440.9 L585.09,441.3 L585.42,442.2 L585.75,442.9 L586.08,444.1 L586.41,446.7 L586.74,447.0 L587.07,447.2 L587.40,446.0 L587.73,446.3 L588.06,446.6 L588.39,446.7 L588.72,447.6 L589.05,446.4 L589.38,447.2 L589.71,447.4 L590.04,445.9 L590.37,447.8 L590.70,446.2 L591.03,446.9 L591.36,447.5 L591.69,446.9 L592.02,447.5 L592.35,446.9 L592.68,447.4 L593.01,447.7 L593.34,445.5 L593.67,447.3 L594.00,446.4 L594.33,447.0 L594.66,446.6 L594.99,447.7 L595.32,447.6 L595.65,448.8 L595.98,446.4 L596.31,446.8 L596.64,447.7 L596.97,446.5 L597.30,446.7 L597.63,445.4 L597.96,446.9 L598.29,446.5 L598.62,446.7 L598.95,446.6 L599.28,447.0 L599.61,447.2 L599.94,446.6 L600.27,446.3 L600.60,447.6 L600.93,447.6 L601.26,447.0 L601.59,446.0 L601.92,447.1 L602.25,447.9 L602.58,446.5 L602.91,446.6 L603.24,445.9 L603.57,446.9 L603.90,445.9 L604.23,447.4 L604.56,446.5 L604.89,446.9 L605.22,447.7 L605.55,447.2 L605.88,446.3 L606.21,446.4 L606.54,447.2 L606.87,446.4 L607.20,446.5 L607.53,446.5 L607.86,446.8 L608.19,446.8 L608.52,447.5 L608.85,447.0 L609.18,446.9 L609.51,447.4 L609.84,447.2 L610.17,446.9 L610.50,446.8 L610.83,446.3 L611.16,447.1 L611.49,446.2 L611.82,444.8 L612.15,443.8 L612.48,442.0 L612.81,441.4 L613.14,440.4 L613.47,442.1 L613.80,444.0 L614.13,444.4 L614.46,444.9 L614.79,447.6 L615.12,446.9 L615.45,446.9 L615.78,446.4 L616.11,446.2 L616.44,447.1 L616.77,447.9 L617.10,446.6 L617.43,446.4 L617.76,446.7 L618.09,447.0 L618.42,447.4 L618.75,445.6 L619.08,447.7 L619.41,447.8 L619.74,446.5 L620.07,446.8 L620.40,446.6 L620.73,446.8 L621.06,446.1 L621.39,446.2 L621.72,447.3 L622.05,446.4 L622.38,447.7 L622.71,447.9 L623.04,446.3 L623.37,447.2 L623.70,448.2 L624.03,447.0 L624.36,447.4 L624.69,446.7 L625.02,447.0 L625.35,447.4 L625.68,447.4 L626.01,446.6 L626.34,447.5 L626.67,446.9 L627.00,447.5 L627.33,446.7 L627.66,446.0 L627.99,446.7 L628.32,446.4 L628.65,446.7 L628.98,447.5 L629.31,447.2 L629.64,447.0 L629.97,446.8 L630.30,447.3 L630.63,446.7 L630.96,447.4 L631.29,447.0 L631.62,447.0 L631.95,447.6 L632.28,446.4 L632.61,447.0 L632.94,446.9 L633.27,447.0 L633.60,448.2 L633.93,447.8 L634.26,447.5 L634.59,446.4 L634.92,447.3 L635.25,446.7 L635.58,447.6 L635.91,447.5 L636.24,447.3 L636.57,446.4 L636.90,447.9 L637.23,447.1 L637.56,446.8 L637.89,446.9 L638.22,447.0 L638.55,446.6 L638.88,446.8 L639.21,447.6 L639.54,446.6 L639.87,447.4 L640.20,447.2 L640.53,446.2 L640.86,445.6 L641.19,446.2 L641.52,446.8 L641.85,447.4 L642.18,447.4 L642.51,446.1 L642.84,446.8 L643.17,447.8 L643.50,446.1 L643.83,446.7 L644.16,446.3 L644.49,446.8 L644.82,448.2 L645.15,447.4 L645.48,447.1 L645.81,447.1 L646.14,446.2 L646.47,447.4 L646.80,447.1 L647.13,447.0 L647.46,447.0 L647.79,447.6 L648.12,447.7 L648.45,448.4 L648.78,446.8 L649.11,447.1 L649.44,446.9 L649.77,447.6 L650.10,447.0 L650.43,447.5 L650.76,447.6 L651.09,446.8 L651.42,446.6 L651.75,446.7 L652.08,447.0 L652.41,447.2 L652.74,446.2 L653.07,446.3 L653.40,447.3 L653.73,447.6 L654.06,446.8 L654.39,446.8 L654.72,447.5 L655.05,445.7 L655.38,448.2 L655.71,447.5 L656.04,446.9 L656.37,446.4 L656.70,448.0 L657.03,447.2 L657.36,446.2 L657.69,446.2 L658.02,447.1 L658.35,447.0 L658.68,447.5 L659.01,446.8 L659.34,447.6 L659.67,448.1 L660.00,447.8 L660.33,447.0 L660.66,447.7 L660.99,446.4 L661.32,446.3 L661.65,446.4 L661.98,446.6 L662.31,446.4 L662.64,446.8 L662.97,446.5 L663.30,446.7 L663.63,446.6 L663.96,447.6 L664.29,447.4 L664.62,447.5 L664.95,446.5 L665.28,446.7 L665.61,447.4 L665.94,447.5 L666.27,447.3 L666.60,446.5 L666.93,447.1 L667.26,447.1 L667.59,447.4 L667.92,447.1 L668.25,446.1 L668.58,447.4 L668.91,447.2 L669.24,446.1 L669.57,446.6 L669.90,447.6 L670.23,446.4 L670.56,447.7 L670.89,446.7 L671.22,448.4 L671.55,447.5 L671.88,446.5 L672.21,447.3 L672.54,447.4 L672.87,447.0 L673.20,447.0 L673.53,447.3 L673.86,447.4 L674.19,446.0 L674.52,446.2 L674.85,446.8 L675.18,447.6 L675.51,447.3 L675.84,447.2 L676.17,446.7 L676.50,446.1 L676.83,447.3 L677.16,446.9 L677.49,447.2 L677.82,446.9 L678.15,447.4 L678.48,446.8 L678.81,446.4 L679.14,447.2 L679.47,447.2 L679.80,446.9 L680.13,447.7 L680.46,446.0 L680.79,447.7 L681.12,447.2 L681.45,447.5 L681.78,446.2 L682.11,447.3 L682.44,447.3 L682.77,445.9 L683.10,447.1 L683.43,447.4 L683.76,447.0 L684.09,446.9 L684.42,447.4 L684.75,447.1 L685.08,447.1 L685.41,446.6 L685.74,446.6 L686.07,446.5 L686.40,447.0 L686.73,446.4 L687.06,446.6 L687.39,444.7 L687.72,442.9 L688.05,440.4 L688.38,437.5 L688.71,439.4 L689.04,441.5 L689.37,444.3 L689.70,445.9 L690.03,447.3 L690.36,447.6 L690.69,448.0 L691.02,446.9 L691.35,447.4 L691.68,445.8 L692.01,446.6 L692.34,447.6 L692.67,446.3 L693.00,446.9 L693.33,446.4 L693.66,447.6 L693.99,446.4 L694.32,446.4 L694.65,447.2 L694.98,447.5 L695.31,447.2 L695.64,446.8 L695.97,445.7 L696.30,446.0 L696.63,446.2 L696.96,447.1 L697.29,447.2 L697.62,446.8 L697.95,447.1 L698.28,447.3 L698.61,447.1 L698.94,446.5 L699.27,447.0 L699.60,446.9 L699.93,447.1 L700.26,447.1 L700.59,447.2 L700.92,446.3 L701.25,446.9 L701.58,446.2 L701.91,447.1 L702.24,446.4 L702.57,447.8 L702.90,447.2 L703.23,447.0 L703.56,447.3 L703.89,447.1 L704.22,447.5 L704.55,447.1 L704.88,447.4 L705.21,447.0 L705.54,447.2 L705.87,447.5 L706.20,447.2 L706.53,447.0 L706.86,447.7 L707.19,446.9 L707.52,446.3 L707.85,447.1 L708.18,446.7 L708.51,446.7 L708.84,447.4 L709.17,446.3 L709.50,445.6 L709.83,447.6 L710.16,445.8 L710.49,447.4 L710.82,446.2 L711.15,448.0 L711.48,446.4 L711.81,446.9 L712.14,447.7 L712.47,447.5 L712.80,447.6 L713.13,447.5 L713.46,446.8 L713.79,447.1 L714.12,448.4 L714.45,447.2 L714.78,446.7 L715.11,446.9 L715.44,446.1 L715.77,448.0 L716.10,446.9 L716.43,447.0 L716.76,446.6 L717.09,447.7 L717.42,447.7 L717.75,447.1 L718.08,447.0 L718.41,448.0 L718.74,446.8 L719.07,447.0 L719.40,446.6 L719.73,448.4 L720.06,446.7 L720.39,447.5 L720.72,447.3 L721.05,446.6 L721.38,446.1 L721.71,446.9 L722.04,447.1 L722.37,446.3 L722.70,447.5 L723.03,447.1 L723.36,447.3 L723.69,447.5 L724.02,446.9 L724.35,445.9 L724.68,446.9 L725.01,446.7 L725.34,447.0 L725.67,446.4 L726.00,446.9 L726.33,447.5 L726.66,446.9 L726.99,446.2 L727.32,447.0 L727.65,446.3 L727.98,447.0 L728.31,445.9 L728.64,446.8 L728.97,446.6 L729.30,447.2 L729.63,446.5 L729.96,447.1 L730.29,447.8 L730.62,446.8 L730.95,447.7 L731.28,446.2 L731.61,446.6 L731.94,447.0 L732.27,446.6 L732.60,448.4 L732.93,446.1 L733.26,447.4 L733.59,446.6 L733.92,445.6 L734.25,447.9 L734.58,447.2 L734.91,446.8 L735.24,446.8 L735.57,447.9 L735.90,447.5 L736.23,446.2 L736.56,447.3 L736.89,446.7 L737.22,447.8 L737.55,447.5 L737.88,448.0 L738.21,446.8 L738.54,446.4 L738.87,446.9 L739.20,447.1 L739.53,446.9 L739.86,446.7 L740.19,447.2 L740.52,446.7 L740.85,445.9 L741.18,445.8 L741.51,447.3 L741.84,447.7 L742.17,445.9 L742.50,446.5 L742.83,446.3 L743.16,446.7 L743.49,447.1 L743.82,446.5 L744.15,446.4 L744.48,446.3 L744.81,447.6 L745.14,446.4 L745.47,447.2 L745.80,447.2 L746.13,446.8 L746.46,447.2 L746.79,445.7 L747.12,446.7 L747.45,446.8 L747.78,447.1 L748.11,446.9 L748.44,447.1 L748.77,446.7 L749.10,446.5 L749.43,446.5 L749.76,447.7 L750.09,447.2 L750.42,446.9 L750.75,447.7 L751.08,446.8 L751.41,447.1 L751.74,447.0 L752.07,446.8 L752.40,447.3 L752.73,446.1 L753.06,446.4 L753.39,447.3 L753.72,446.7 L754.05,446.6 L754.38,447.4 L754.71,447.2 L755.04,446.6 L755.37,448.4 L755.70,447.7 L756.03,446.8 L756.36,446.7 L756.69,447.5 L757.02,446.5 L757.35,445.8 L757.68,446.9 L758.01,447.0 L758.34,447.0 L758.67,447.6 L759.00,446.7 L759.33,446.9 L759.66,446.6 L759.99,446.2 L760.32,447.0 L760.65,446.9 L760.98,446.8 L761.31,446.0 L761.64,447.8 L761.97,447.0 L762.30,447.3 L762.63,446.9 L762.96,446.5 L763.29,447.0 L763.62,446.6 L763.95,446.9 L764.28,447.4 L764.61,447.4 L764.94,447.8 L765.27,446.9 L765.60,447.2 L765.93,446.5 L766.26,446.5 L766.59,447.5 L766.92,447.6 L767.25,446.7 L767.58,447.5 L767.91,446.9 L768.24,446.7 L768.57,447.2 L768.90,446.0 L769.23,447.4 L769.56,446.8 L769.89,447.2 L770.22,448.6 L770.55,447.1 L770.88,447.1 L771.21,446.7 L771.54,447.1 L771.87,447.4 L772.20,447.3 L772.53,447.2 L772.86,446.6 L773.19,447.1 L773.52,446.3 L773.85,446.5 L774.18,447.4 L774.51,446.4 L774.84,448.2 L775.17,447.0 L775.50,447.5 L775.83,447.0 L776.16,446.4 L776.49,447.0 L776.82,447.1 L777.15,446.3 L777.48,447.4 L777.81,447.5 L778.14,446.5 L778.47,446.7 L778.80,447.8 L779.13,446.9 L779.46,446.6 L779.79,447.1 L780.12,447.2 L780.45,446.9 L780.78,446.9 L781.11,447.4 L781.44,446.5 L781.77,447.9 L782.10,447.0 L782.43,445.8 L782.76,447.6 L783.09,447.0 L783.42,448.2 L783.75,447.5 L784.08,447.6 L784.41,447.0 L784.74,447.3 L785.07,446.0 L785.40,447.5 L785.73,447.0 L786.06,446.9 L786.39,446.6 L786.72,446.5 L787.05,447.9 L787.38,445.8 L787.71,447.2 L788.04,447.4 L788.37,447.9 L788.70,447.2 L789.03,448.0 L789.36,446.9 L789.69,447.3 L790.02,446.8 L790.35,447.4 L790.68,447.0 L791.01,445.8 L791.34,446.3 L791.67,446.9' fill='none' stroke='#eeeeee' stroke-width='1'/></svg><div class='a' style='left:0;top:108px;width:398px;height:20px;background:#e9e9e9;border-top:1px solid #f8f8f8;border-bottom:1px solid #777'></div><div class='b' style='left:-10px;top:109px;width:17px;height:17px'></div><div class='b' style='left:7px;top:109px;width:17px;height:17px'></div><div class='b' style='left:24px;top:109px;width:16px;height:17px'></div><div class='b' style='left:40px;top:109px;width:17px;height:17px'></div><div class='b' style='left:57px;top:109px;width:17px;height:17px'></div><div class='b' style='left:74px;top:109px;width:16px;height:17px'></div><div class='b' style='left:90px;top:109px;width:17px;height:17px'></div><div class='b' style='left:107px;top:109px;width:16px;height:17px'></div><div class='b' style='left:123px;top:109px;width:22px;height:17px'></div><div class='a' style='left:144px;top:109px;width:3px;height:17px;background:#a8a8a8'></div><div class='a' style='left:148px;top:110px;width:124px;height:15px;background:#fff;border-top:1px solid #777;border-left:1px solid #999'></div><div class='b' style='left:274px;top:109px;width:17px;height:17px;border-color:#707070 #fff #fff #707070;background:#f6f6f6'></div><div class='b' style='left:291px;top:109px;width:16px;height:17px'></div><div class='b' style='left:307px;top:109px;width:17px;height:17px'></div><div class='b' style='left:324px;top:109px;width:17px;height:17px'></div><div class='b' style='left:341px;top:109px;width:16px;height:17px'></div><div class='b' style='left:357px;top:109px;width:17px;height:17px'></div><div class='b' style='left:374px;top:109px;width:16px;height:17px'></div><div class='b' style='left:390px;top:109px;width:17px;height:17px'></div><svg style='left:0;top:108px' width='400' height='20'>
<circle cx='0.5' cy='9.5' r='4.5' stroke='#444' stroke-width='1.4' fill='none'/>
<rect x='10.5' y='5' width='9.5' height='10' fill='#c4c4c4'/><rect x='11' y='9' width='8.5' height='2.4' fill='#707070'/>
<rect x='27' y='5' width='9.5' height='10' fill='#cfcfcf'/><rect x='27.5' y='9' width='8.5' height='2.2' fill='#6a6a6a'/><rect x='30.7' y='6' width='2.2' height='8' fill='#6a6a6a'/>
<rect x='44' y='5' width='9' height='10' fill='#d0d0d0'/><path d='M45,10 L48,7 L48,13Z M52,10 L49,7 L49,13Z' fill='#808080'/>
<rect x='60.5' y='5' width='9' height='10' fill='#d0d0d0'/><path d='M65,5.5 L61.5,9 L68.5,9Z M65,14.5 L61.5,11 L68.5,11Z' fill='#808080'/>
<rect x='77' y='5' width='9' height='10' fill='#cacaca'/><path d='M81.5,9.5 L78,6 L85,6Z M81.5,10.5 L78,14 L85,14Z' fill='#6a6a6a'/><rect x='77.5' y='9.3' width='8' height='1.2' fill='#555'/>
<rect x='93.5' y='5' width='9' height='10' fill='#d2d2d2'/><path d='M95,8 C96,5.5 100,5.5 101,8 M101,12 C100,14.5 96,14.5 95,12' stroke='#7a7a7a' stroke-width='1.4' fill='none'/>
<rect x='110' y='5' width='9' height='10' fill='#d0d0d0'/><path d='M114.5,5.5 L111,9 L118,9Z M114.5,14.5 L111,11 L118,11Z' fill='#8a8a8a'/>
<text x='130' y='12' font-family='Liberation Sans' font-size='9' fill='#8c8c8c'>0</text>
<path d='M278.5,4.5 L278.5,13 L280.5,11 L282.5,14.5 L284,13.5 L282,10.5 L285,10.5Z' stroke='#333' stroke-width='0.9' fill='#fff'/>
<text x='283' y='16' font-family='Liberation Sans' font-size='6.5' fill='#111'>z</text>
<circle cx='297' cy='9' r='3.6' stroke='#222' stroke-width='1.3' fill='none'/><path d='M299.5,11.5 L302,14.5' stroke='#222' stroke-width='1.6'/>
<path d='M310,15 C312,14 312,5 313.5,5 C315,5 315,12 316.5,12 C318,12 318,5 319,5 C320,5 320,14 322,15' stroke='#222' stroke-width='0.9' fill='none'/><path d='M309,8 L322,8' stroke='#2a2ad0' stroke-width='1.2'/>
<path d='M326,15 L328,11 L329.5,4 L331,10 L332.5,8 L334,12 L336,15Z' fill='#1010a0'/>
<text x='344' y='10' font-family='Liberation Sans' font-size='6' font-weight='bold' fill='#111'>B.E</text><path d='M343,13 L353,13' stroke='#2020a0' stroke-width='1'/><circle cx='345' cy='13' r='0.8' fill='#2020a0'/><circle cx='348' cy='13' r='0.8' fill='#2020a0'/><circle cx='351' cy='13' r='0.8' fill='#2020a0'/>
<text x='360' y='10' font-family='Liberation Sans' font-size='6' font-weight='bold' fill='#111'>D.E</text><path d='M359,13 L369,13' stroke='#2020a0' stroke-width='1'/><circle cx='361' cy='13' r='0.8' fill='#2020a0'/><circle cx='364' cy='13' r='0.8' fill='#2020a0'/><circle cx='367' cy='13' r='0.8' fill='#2020a0'/>
<path d='M376,15 C378,14 378,5 379.5,5 C381,5 381,12 382.5,12 C384,12 384,5 385,5 C386,5 386,14 388,15' stroke='#222' stroke-width='0.9' fill='none'/>
<text x='391' y='13' font-family='Liberation Sans' font-size='8' fill='#222'>K</text>
</svg><div class='a' style='left:790px;top:15px;width:10px;height:429px;background:#078080'></div><div class='a' style='left:795px;top:15px;width:5px;height:11px;background:linear-gradient(180deg,#b8d0d0 0,#b8d0d0 3.5px,#101418 4px,#101418 8px,#5a8a8a 9px,#078080 11px)'></div><div class='a' style='left:397.5px;top:15px;width:398px;height:308px;border-radius:6px 6px 4px 4px;background:#0f1826;border:1px solid #8a94a4;border-top-color:#3c4a58'></div><div class='a' style='left:790px;top:31px;width:5px;height:290px;background:linear-gradient(90deg,#17405a,#2a6a88);border-radius:0 0 3px 0'></div><div class='a' style='left:795px;top:27px;width:1px;height:295px;background:#4aa4bc'></div><div class='a' style='left:401.5px;top:36px;width:389.5px;height:282px;background:linear-gradient(90deg,#aab4c2 0px,#d4dae2 3px,#e4e8ee 100%)'></div><div class='a' style='left:399px;top:16px;width:395px;height:21px;border-radius:5px 5px 0 0;background:linear-gradient(180deg,#5aaaba 0%,#4a9cac 25%,#4290a2 50%,#4a7c98 70%,#3a5a76 82%,#1e2c40 92%,#182232 100%)'></div><svg style='left:403px;top:22px' width='12' height='9'><path d='M0.5,4.5 L4,4.5 M0.5,3 L4,3 M0.5,6 L4,6' stroke='#223' stroke-width='0.8'/><path d='M4,1.5 L11,1.5 L11,7.5 L4,7.5Z' fill='#1a1a22' stroke='#ccc' stroke-width='0.6'/></svg><div class='t' style='left:418px;top:20.5px;font-size:10px;line-height:12px;letter-spacing:-0.47px;color:#10202a'>ICDD/JCPDS PDF Retrievals [Level-2 PDF, Sets 1-54 (03/17/04)]</div><div class='a' style='left:717.5px;top:15.5px;width:20.5px;height:15px;border:1px solid #3a6478;border-top:none;box-shadow:inset 0 0 0 1px rgba(190,230,240,0.35);background:linear-gradient(180deg,#62aec0,#4a96aa 50%,#3c8098)'></div><div class='a' style='left:723px;top:23.5px;width:8.5px;height:2.5px;background:#f4f8fa;box-shadow:0 0 0 0.7px #40505e'></div><div class='a' style='left:738px;top:15.5px;width:19.5px;height:15px;border:1px solid #3a6478;border-top:none;border-left:none;box-shadow:inset 0 0 0 1px rgba(190,230,240,0.35);background:linear-gradient(180deg,#62aec0,#4a96aa 50%,#3c8098)'></div><div class='a' style='left:743.5px;top:19.5px;width:7.5px;height:6px;background:#3a4a58;border:1.3px solid #f0f4f8;box-shadow:0 0 0 0.7px #2a3a48'></div><div class='a' style='left:757.5px;top:15.5px;width:37px;height:15px;border:1px solid #3a6478;border-top:none;border-radius:0 5px 3px 3px;box-shadow:inset 0 0 0 1px rgba(230,240,250,0.4);background:linear-gradient(180deg,#c4d2e2,#a8bcd2 50%,#98aec8)'></div><svg style='left:770px;top:18px' width='12' height='10'><path d='M1.5,1 L10,8.5 M10,1 L1.5,8.5' stroke='#f4f8fc' stroke-width='2.8'/><path d='M1.5,1 L10,8.5 M10,1 L1.5,8.5' stroke='#6a7a90' stroke-width='1.2'/></svg><div class='a' style='left:404.5px;top:36px;width:384px;height:278.5px;background:#f0f0f0;border-left:1px solid #8a8a8a'></div><div class='a' style='left:788px;top:36px;width:3px;height:282px;background:#e6f0f2'></div><div class='a' style='left:402px;top:314.5px;width:389px;height:3px;background:#e8ecf0'></div><div class='a' style='left:405px;top:36px;width:384px;height:19px;background:#f0f0f0'></div><div class='b' style='left:405px;top:37px;width:16px;height:16px;border-color:#222 #222 #222 #222;background:#fafafa'></div><div class='b' style='left:422px;top:37px;width:15px;height:16px;'></div><div class='b' style='left:438px;top:37px;width:17px;height:16px;'></div><div class='b' style='left:456px;top:37px;width:16px;height:16px;'></div><div class='b' style='left:473px;top:37px;width:16px;height:16px;'></div><div class='b' style='left:490px;top:37px;width:17px;height:16px;'></div><div class='b' style='left:507px;top:37px;width:17px;height:16px;'></div><div class='b' style='left:524px;top:37px;width:17px;height:16px;'></div><div class='b' style='left:541px;top:37px;width:17px;height:16px;'></div><div class='b' style='left:558px;top:37px;width:17px;height:16px;'></div><div class='b' style='left:575px;top:37px;width:18px;height:16px;'></div><div class='b' style='left:593px;top:37px;width:17px;height:16px;'></div><div class='b' style='left:610px;top:37px;width:17px;height:16px;'></div><div class='b' style='left:627px;top:37px;width:17px;height:16px;'></div><div class='b' style='left:644px;top:37px;width:17px;height:16px;'></div><div class='b' style='left:661px;top:37px;width:17px;height:16px;'></div><div class='b' style='left:678px;top:37px;width:18px;height:16px;'></div><svg style='left:0;top:36px' width='800' height='20'>
<path d='M409,5 L417,13 M417,5 L409,13' stroke='#000' stroke-width='1.8'/>
<path d='M424,14 L426,8 L427,14 L428.5,4 L430,14 L431.5,6 L433,14 L434.5,9 L436,14Z' fill='#d890d8' stroke='#a0a0c0' stroke-width='0.4'/>
<rect x='441.5' y='5' width='10' height='9' fill='#fff' stroke='#7a2020' stroke-width='1.3'/><path d='M444,7.5 L449,7.5 M444,9.5 L449,9.5 M444,11.5 L449,11.5' stroke='#c02020' stroke-width='1'/>
<rect x='458' y='3.5' width='12' height='12' fill='#a0a8a0'/><path d='M458,3.5 L464,9.5 L458,15.5Z' fill='#30b060'/><path d='M470,3.5 L464,9.5 L470,15.5Z' fill='#4070d0'/><path d='M458,3.5 L464,9.5 L470,3.5Z' fill='#90c040'/><path d='M458,15.5 L464,9.5 L470,15.5Z' fill='#50c0c0'/><circle cx='464' cy='9.5' r='1.5' fill='#fff'/>
<text x='476' y='9' font-family='Liberation Sans' font-size='6.5' fill='#3030a0'>S</text><path d='M476,14 L486,4' stroke='#444' stroke-width='0.8'/><text x='481' y='14.5' font-family='Liberation Sans' font-size='6' fill='#333'>M</text>
<path d='M493,10 L504,10 L504,14 L493,14Z' fill='#444'/><path d='M495,6 L502,6 L503,10 L494,10Z' fill='#eee' stroke='#333' stroke-width='0.8'/><rect x='495' y='11' width='7' height='1.5' fill='#ddd'/>
<rect x='511' y='4' width='10' height='11' fill='#207080'/><rect x='513' y='5' width='6' height='4' fill='#40a0b0'/><rect x='513' y='11' width='6' height='3' fill='#111'/>
<rect x='528' y='6' width='7' height='7' fill='#fff' stroke='#333' stroke-width='1'/><rect x='531' y='8' width='7' height='7' fill='#fff' stroke='#333' stroke-width='1'/>
<path d='M545,5 L554,5 M548,8 L555,8 M548,11 L555,11 M548,14 L555,14 M547,5 L547,14' stroke='#111' stroke-width='1.3'/>
<path d='M561,7 L565,7 L566,8 L572,8 L572,14 L561,14Z' fill='#30a8b0'/><path d='M563,10 L574,10 L572,14 L561,14Z' fill='#50c8d0'/><path d='M567,5 L573,6' stroke='#d03030' stroke-width='1'/>
<circle cx='584' cy='9.5' r='5.5' fill='#108a30'/><text x='581.5' y='13' font-family='Liberation Sans' font-size='8' font-weight='bold' fill='#fff'>?</text>
<rect x='596' y='7' width='11' height='6' rx='1' fill='#444'/><rect x='598' y='8' width='7' height='3.5' fill='#b0b0f0'/><path d='M597,6 L606,6 M597,14 L606,14' stroke='#333' stroke-width='1'/>
<text x='612' y='14' font-family='Liberation Serif' font-size='9' fill='#222'>1:2</text>
<rect x='631' y='6' width='9' height='8' fill='#fff' stroke='#333' stroke-width='1'/><rect x='629' y='8' width='9' height='7' fill='#ddd' stroke='#333' stroke-width='1'/>
<rect x='648' y='4' width='9' height='11' fill='#e08030'/><rect x='648' y='4' width='3' height='11' fill='#2020a0'/><rect x='654' y='4' width='3' height='11' fill='#1a1a60'/><rect x='651' y='4' width='1' height='11' fill='#f0d040'/>
<circle cx='669.5' cy='9.5' r='2.2' fill='none' stroke='#e02020' stroke-width='1.2'/><path d='M669.5,4 L669.5,6 M669.5,13 L669.5,15 M664,9.5 L666,9.5 M673,9.5 L675,9.5 M665.5,5.5 L667,7 M672,12 L673.5,13.5 M673.5,5.5 L672,7 M667,12 L665.5,13.5' stroke='#e06060' stroke-width='0.8'/>
<path d='M683,8 L683,5 M681,6.5 L683,4 L685,6.5 M683,11 L683,14 M681,12.5 L683,15 L685,12.5' stroke='#1a2ab0' stroke-width='1'/><rect x='687' y='5' width='5' height='3' fill='#222'/><rect x='687' y='11' width='5' height='3' fill='#2a3ac0'/>
</svg><div class='a' style='left:697px;top:37px;width:50px;height:16px;background:#f4f4f4;border:1px solid;border-color:#fff #888 #888 #fff'></div><div class='a' style='left:748px;top:37px;width:39px;height:16px;background:#f4f4f4;border:1px solid;border-color:#fff #888 #888 #fff'></div><svg style='left:0;top:36px' width='800' height='20'><path d='M701.5,14 L701.5,5.5 L710,5.5' stroke='#858585' stroke-width='1.4' fill='none'/><path d='M702.5,13.5 L702.5,6.5 L709.5,6.5' stroke='#fff' stroke-width='0.8' fill='none'/><path d='M713.5,14 L713.5,5.5 L722,5.5' stroke='#858585' stroke-width='1.4' fill='none'/><path d='M714.5,13.5 L714.5,6.5 L721.5,6.5' stroke='#fff' stroke-width='0.8' fill='none'/><path d='M725.5,14 L725.5,5.5 L734,5.5' stroke='#858585' stroke-width='1.4' fill='none'/><path d='M726.5,13.5 L726.5,6.5 L733.5,6.5' stroke='#fff' stroke-width='0.8' fill='none'/><path d='M736.5,14 L736.5,5.5 L745,5.5' stroke='#858585' stroke-width='1.4' fill='none'/><path d='M737.5,13.5 L737.5,6.5 L744.5,6.5' stroke='#fff' stroke-width='0.8' fill='none'/><path d='M752.5,14 L752.5,5.5 L761,5.5' stroke='#858585' stroke-width='1.4' fill='none'/><path d='M753.5,13.5 L753.5,6.5 L760.5,6.5' stroke='#fff' stroke-width='0.8' fill='none'/><path d='M764.5,14 L764.5,5.5 L773,5.5' stroke='#858585' stroke-width='1.4' fill='none'/><path d='M765.5,13.5 L765.5,6.5 L772.5,6.5' stroke='#fff' stroke-width='0.8' fill='none'/><path d='M776.5,14 L776.5,5.5 L785,5.5' stroke='#858585' stroke-width='1.4' fill='none'/><path d='M777.5,13.5 L777.5,6.5 L784.5,6.5' stroke='#fff' stroke-width='0.8' fill='none'/></svg><div class='a' style='left:788px;top:38px;width:1px;height:15px;background:#777'></div><div class='a' style='left:405px;top:55px;width:102px;height:14px;background:#fff;border:1px solid;border-color:#7a7a7a #e8e8e8 #e8e8e8 #7a7a7a'></div><div class='t' style='left:408px;top:57px;font-size:8.4px;letter-spacing:-0.15px;color:#111'>Inorganics (54/58735 @C</div><div class='b' style='left:495px;top:56px;width:11px;height:12px;background:#f0f0f0'></div><svg style='left:495px;top:56px' width='11' height='12'><path d='M2.5,4.5 L8,4.5 L5.25,7.5Z' fill='#000'/></svg><div class='a' style='left:510px;top:55px;width:71px;height:14px;background:#fff;border:1px solid;border-color:#7a7a7a #e8e8e8 #e8e8e8 #7a7a7a'></div><div class='t' style='left:513px;top:57px;font-size:8.4px;letter-spacing:-0.15px;color:#111'>36-1274</div><div class='b' style='left:569px;top:56px;width:11px;height:12px;background:#f0f0f0'></div><svg style='left:569px;top:56px' width='11' height='12'><path d='M2.5,4.5 L8,4.5 L5.25,7.5Z' fill='#000'/></svg><div class='b' style='left:581px;top:55px;width:16px;height:14px;background:#e8eef0'></div><svg style='left:581px;top:55px' width='16' height='14'><path d='M8,2 L11.5,6.5 L10.5,10.5 L8,12 L5.5,10.5 L4.5,6.5Z' fill='#0e8a9a'/><path d='M8,3.5 L10,6.5 L8,9.5 L6,6.5Z' fill='#60e0f0'/></svg><div class='a' style='left:597px;top:55px;width:81px;height:14px;background:#fff;border:1px solid;border-color:#7a7a7a #e8e8e8 #e8e8e8 #7a7a7a'></div><div class='b' style='left:666px;top:56px;width:11px;height:12px;background:#f0f0f0'></div><svg style='left:666px;top:56px' width='11' height='12'><path d='M2.5,4.5 L8,4.5 L5.25,7.5Z' fill='#000'/></svg><div class='a' style='left:681px;top:55px;width:49px;height:14px;background:#fff;border:1px solid;border-color:#7a7a7a #e8e8e8 #e8e8e8 #7a7a7a'></div><div class='t' style='left:684px;top:57px;font-size:8.4px;letter-spacing:-0.15px;color:#111'>Gd</div><div class='a' style='left:731px;top:55px;width:23px;height:14px;background:#fff;border:1px solid;border-color:#7a7a7a #e8e8e8 #e8e8e8 #7a7a7a'></div><div class='t' style='left:734px;top:57px;font-size:8.4px;letter-spacing:-0.15px;color:#111'>2</div><div class='a' style='left:756px;top:55px;width:22px;height:14px;background:#fff;border:1px solid;border-color:#7a7a7a #e8e8e8 #e8e8e8 #7a7a7a'></div><div class='t' style='left:759px;top:57px;font-size:8.4px;letter-spacing:-0.15px;color:#111'>100</div><div class='a' style='left:778px;top:55px;width:9px;height:14px;background:#f0f0f0;border:1px solid #bbb'></div><svg style='left:778px;top:55px' width='9' height='14'><path d='M2.5,5 L4.5,3 L6.5,5Z M2.5,9 L4.5,11 L6.5,9Z' fill='#333'/><path d='M1,7 L8,7' stroke='#aaa' stroke-width='0.6'/></svg><div class='a' style='left:405px;top:70px;width:383px;height:244.5px;background:#fff;border:1px solid #8e8f8f;border-bottom:none;border-right:none'></div><div class='a' style='left:406px;top:71px;width:381px;height:14px;background:linear-gradient(#fbfbfb,#f0f0f0);border-bottom:1px solid #a8a8a8'></div><div class='a' style='left:490px;top:71px;width:1px;height:13px;background:#b8b8b8'></div><div class='a' style='left:564px;top:71px;width:1px;height:13px;background:#b8b8b8'></div><div class='a' style='left:601px;top:71px;width:1px;height:13px;background:#b8b8b8'></div><div class='a' style='left:614px;top:71px;width:1px;height:13px;background:#b8b8b8'></div><div class='a' style='left:628px;top:71px;width:1px;height:13px;background:#b8b8b8'></div><div class='a' style='left:653px;top:71px;width:1px;height:13px;background:#b8b8b8'></div><div class='a' style='left:676px;top:71px;width:1px;height:13px;background:#b8b8b8'></div><div class='a' style='left:710px;top:71px;width:1px;height:13px;background:#b8b8b8'></div><div class='a' style='left:771px;top:71px;width:1px;height:13px;background:#b8b8b8'></div><div class='t' style='left:410.5px;top:75px;font-size:8.2px;letter-spacing:-0.32px;color:#151515'>13 Hits Sorted on Ph...</div><div class='t' style='left:496px;top:75px;font-size:8.2px;letter-spacing:-0.32px;color:#151515'>Chemical Formula</div><div class='t' style='left:574px;top:75px;font-size:8.2px;letter-spacing:-0.32px;color:#151515'>PDF-#</div><div class='t' style='left:608px;top:75px;font-size:8.2px;letter-spacing:-0.32px;color:#151515'>J</div><div class='t' style='left:619.5px;top:75px;font-size:8.2px;letter-spacing:-0.32px;color:#151515'>D</div><div class='t' style='left:634px;top:75px;font-size:8.2px;letter-spacing:-0.32px;color:#151515'>#d/I</div><div class='t' style='left:660px;top:75px;font-size:8.2px;letter-spacing:-0.32px;color:#151515'>RIR</div><div class='t' style='left:683px;top:75px;font-size:8.2px;letter-spacing:-0.32px;color:#151515'>P.S.</div><div class='t' style='left:716.5px;top:75px;font-size:8.2px;letter-spacing:-0.32px;color:#151515'>Space Group</div><div class='a' style='left:406px;top:85.3px;width:382px;height:9px;background:#ebebeb'></div><div class='a' style='left:406px;top:85px;width:381px;height:218px;overflow:hidden'><div class='t' style='left:3px;top:0.6px;color:#0c0c0c'>Gadolinium</div><div class='t' style='left:90px;top:0.6px;color:#0c0c0c'>Gd</div><div class='t' style='left:164.5px;top:0.6px;color:#0c0c0c'>02-0864</div><div class='t' style='left:194px;width:20px;text-align:center;top:0.6px;color:#0c0c0c'>?</div><div class='t' style='left:207.5px;width:20px;text-align:center;top:0.6px;color:#0c0c0c'>V</div><div class='t' style='right:136.5px;top:0.6px;color:#0c0c0c'>18</div><div class='t' style='left:277px;top:0.6px;color:#0c0c0c'>hP2</div><div class='t' style='left:310.5px;top:0.6px;color:#0c0c0c'>P63/mmc (194)</div><div class='t' style='right:0.0px;top:0.6px;color:#0c0c0c'>3.</div><div class='t' style='left:3px;top:10.7px;color:#0c0c0c'>Gadolinium Zinc</div><div class='t' style='left:90px;top:10.7px;color:#0c0c0c'>GdZn12</div><div class='t' style='left:164.5px;top:10.7px;color:#0c0c0c'>19-0487</div><div class='t' style='left:194px;width:20px;text-align:center;top:10.7px;color:#0c0c0c'>?</div><div class='t' style='left:207.5px;width:20px;text-align:center;top:10.7px;color:#0c0c0c'>V</div><div class='t' style='right:136.5px;top:10.7px;color:#0c0c0c'>78</div><div class='t' style='left:277px;top:10.7px;color:#0c0c0c'>tI26</div><div class='t' style='left:310.5px;top:10.7px;color:#0c0c0c'>I4/mmm (139)</div><div class='t' style='right:0.0px;top:10.7px;color:#0c0c0c'>8.</div><div class='t' style='left:3px;top:20.8px;color:#0c0c0c'>Gadolinium Zinc</div><div class='t' style='left:90px;top:20.8px;color:#0c0c0c'>GdZn5</div><div class='t' style='left:164.5px;top:20.8px;color:#0c0c0c'>26-0665</div><div class='t' style='left:194px;width:20px;text-align:center;top:20.8px;color:#0c0c0c'>?</div><div class='t' style='left:207.5px;width:20px;text-align:center;top:20.8px;color:#0c0c0c'>V</div><div class='t' style='right:136.5px;top:20.8px;color:#0c0c0c'>20</div><div class='t' style='left:277px;top:20.8px;color:#0c0c0c'>hP6</div><div class='t' style='left:310.5px;top:20.8px;color:#0c0c0c'>P6/mmm (191)</div><div class='t' style='right:0.0px;top:20.8px;color:#0c0c0c'>5.</div><div class='t' style='left:3px;top:30.9px;color:#0c0c0c'>Gadolinium Zinc</div><div class='t' style='left:90px;top:30.9px;color:#0c0c0c'>GdZn</div><div class='t' style='left:164.5px;top:30.9px;color:#0c0c0c'>19-0486</div><div class='t' style='left:194px;width:20px;text-align:center;top:30.9px;color:#0c0c0c'>?</div><div class='t' style='left:207.5px;width:20px;text-align:center;top:30.9px;color:#0c0c0c'>V</div><div class='t' style='right:136.5px;top:30.9px;color:#0c0c0c'>16</div><div class='t' style='left:277px;top:30.9px;color:#0c0c0c'>cP2</div><div class='t' style='left:310.5px;top:30.9px;color:#0c0c0c'>Pm-3m (221)</div><div class='t' style='right:0.0px;top:30.9px;color:#0c0c0c'>3.</div><div class='t' style='left:3px;top:41.0px;color:#0c0c0c'>Magnesium</div><div class='t' style='left:90px;top:41.0px;color:#0c0c0c'>Mg</div><div class='t' style='left:164.5px;top:41.0px;color:#0c0c0c'>35-0821</div><div class='t' style='left:194px;width:20px;text-align:center;top:41.0px;color:#0c0c0c'>+</div><div class='t' style='left:207.5px;width:20px;text-align:center;top:41.0px;color:#0c0c0c'>D</div><div class='t' style='right:136.5px;top:41.0px;color:#0c0c0c'>27</div><div class='t' style='left:277px;top:41.0px;color:#0c0c0c'>hP2</div><div class='t' style='left:310.5px;top:41.0px;color:#0c0c0c'>P63/mmc (194)</div><div class='t' style='right:0.0px;top:41.0px;color:#0c0c0c'>3.</div><div class='t' style='left:3px;top:51.1px;color:#0c0c0c'>Magnesium Zinc</div><div class='t' style='left:90px;top:51.1px;color:#0c0c0c'>Mg7Zn3</div><div class='t' style='left:164.5px;top:51.1px;color:#0c0c0c'>08-0269</div><div class='t' style='left:194px;width:20px;text-align:center;top:51.1px;color:#0c0c0c'>?</div><div class='t' style='left:207.5px;width:20px;text-align:center;top:51.1px;color:#0c0c0c'>X</div><div class='t' style='right:136.5px;top:51.1px;color:#0c0c0c'>39</div><div class='t' style='left:277px;top:51.1px;color:#0c0c0c'>cI140</div><div class='t' style='left:310.5px;top:51.1px;color:#0c0c0c'>I</div><div class='t' style='right:0.0px;top:51.1px;color:#0c0c0c'>14.</div><div class='t' style='left:3px;top:61.2px;color:#0c0c0c'>Magnesium Zinc</div><div class='t' style='left:90px;top:61.2px;color:#0c0c0c'>Mg2Zn3</div><div class='t' style='left:164.5px;top:61.2px;color:#0c0c0c'>08-0196</div><div class='t' style='left:207.5px;width:20px;text-align:center;top:61.2px;color:#0c0c0c'>X</div><div class='t' style='right:136.5px;top:61.2px;color:#0c0c0c'>59</div><div class='t' style='left:277px;top:61.2px;color:#0c0c0c'>aP46.5</div><div class='t' style='left:310.5px;top:61.2px;color:#0c0c0c'>P* (2)</div><div class='t' style='right:0.0px;top:61.2px;color:#0c0c0c'>17.</div><div class='t' style='left:3px;top:71.3px;color:#0c0c0c'>Magnesium Zinc</div><div class='t' style='left:90px;top:71.3px;color:#0c0c0c'>Mg2Zn11</div><div class='t' style='left:164.5px;top:71.3px;color:#0c0c0c'>06-0664</div><div class='t' style='left:207.5px;width:20px;text-align:center;top:71.3px;color:#0c0c0c'>V</div><div class='t' style='right:136.5px;top:71.3px;color:#0c0c0c'>30</div><div class='t' style='left:277px;top:71.3px;color:#0c0c0c'>cP39</div><div class='t' style='left:310.5px;top:71.3px;color:#0c0c0c'>Pm-3 (200)</div><div class='t' style='right:0.0px;top:71.3px;color:#0c0c0c'>8.</div><div class='t' style='left:3px;top:81.4px;color:#0c0c0c'>Magnesium Zinc</div><div class='t' style='left:90px;top:81.4px;color:#0c0c0c'>Mg4Zn7</div><div class='t' style='left:164.5px;top:81.4px;color:#0c0c0c'>29-0878</div><div class='t' style='left:194px;width:20px;text-align:center;top:81.4px;color:#0c0c0c'>+</div><div class='t' style='left:207.5px;width:20px;text-align:center;top:81.4px;color:#0c0c0c'>C</div><div class='t' style='right:136.5px;top:81.4px;color:#0c0c0c'>59</div><div class='t' style='right:112.5px;top:81.4px;color:#0c0c0c'>0.93</div><div class='t' style='left:277px;top:81.4px;color:#0c0c0c'>mC110</div><div class='t' style='left:310.5px;top:81.4px;color:#0c0c0c'>C2/m (12)</div><div class='t' style='right:0.0px;top:81.4px;color:#0c0c0c'>25.</div><div class='t' style='left:3px;top:91.5px;color:#0c0c0c'>Magnesium Zinc</div><div class='t' style='left:90px;top:91.5px;color:#0c0c0c'>MgZn2</div><div class='t' style='left:164.5px;top:91.5px;color:#0c0c0c'>34-0457</div><div class='t' style='left:194px;width:20px;text-align:center;top:91.5px;color:#0c0c0c'>+</div><div class='t' style='left:207.5px;width:20px;text-align:center;top:91.5px;color:#0c0c0c'>D</div><div class='t' style='right:136.5px;top:91.5px;color:#0c0c0c'>64</div><div class='t' style='left:277px;top:91.5px;color:#0c0c0c'>hP12</div><div class='t' style='left:310.5px;top:91.5px;color:#0c0c0c'>P63/mmc (194)</div><div class='t' style='right:0.0px;top:91.5px;color:#0c0c0c'>5.</div><div class='t' style='left:3px;top:101.6px;color:#0c0c0c'>Magnesium Zinc</div><div class='t' style='left:90px;top:101.6px;color:#0c0c0c'>MgZn</div><div class='t' style='left:164.5px;top:101.6px;color:#0c0c0c'>40-1334</div><div class='t' style='left:207.5px;width:20px;text-align:center;top:101.6px;color:#0c0c0c'>F</div><div class='t' style='right:136.5px;top:101.6px;color:#0c0c0c'>31</div><div class='t' style='left:277px;top:101.6px;color:#0c0c0c'>hR178</div><div class='t' style='left:310.5px;top:101.6px;color:#0c0c0c'>R</div><div class='t' style='right:0.0px;top:101.6px;color:#0c0c0c'>25.</div><div class='t' style='left:3px;top:111.7px;color:#0c0c0c'>Magnesium Zinc</div><div class='t' style='left:90px;top:111.7px;color:#0c0c0c'>Mg102.08Zn39.60</div><div class='t' style='left:164.5px;top:111.7px;color:#0c0c0c'>41-1292</div><div class='t' style='left:194px;width:20px;text-align:center;top:111.7px;color:#0c0c0c'>+</div><div class='t' style='left:207.5px;width:20px;text-align:center;top:111.7px;color:#0c0c0c'>C</div><div class='t' style='right:136.5px;top:111.7px;color:#0c0c0c'>199</div><div class='t' style='right:112.5px;top:111.7px;color:#0c0c0c'>1.17</div><div class='t' style='left:277px;top:111.7px;color:#0c0c0c'>oI141.7</div><div class='t' style='left:310.5px;top:111.7px;color:#0c0c0c'>Immm (71)</div><div class='t' style='right:0.0px;top:111.7px;color:#0c0c0c'>14.</div><div class='t' style='left:3px;top:121.8px;color:#0c0c0c'>Zinc, syn</div><div class='t' style='left:90px;top:121.8px;color:#0c0c0c'>Zn</div><div class='t' style='left:164.5px;top:121.8px;color:#0c0c0c'>04-0831</div><div class='t' style='left:194px;width:20px;text-align:center;top:121.8px;color:#0c0c0c'>+</div><div class='t' style='left:207.5px;width:20px;text-align:center;top:121.8px;color:#0c0c0c'>D</div><div class='t' style='right:136.5px;top:121.8px;color:#0c0c0c'>20</div><div class='t' style='right:112.5px;top:121.8px;color:#0c0c0c'>3.80</div><div class='t' style='left:277px;top:121.8px;color:#0c0c0c'>hP2</div><div class='t' style='left:310.5px;top:121.8px;color:#0c0c0c'>P63/mmc (194)</div><div class='t' style='right:0.0px;top:121.8px;color:#0c0c0c'>2.</div></div><div class='a' style='left:406px;top:302.5px;width:382px;height:12px;background:#ececec'></div><svg style='left:406px;top:302.5px' width='14' height='12'><path d='M7.5,3.5 L5,6 L7.5,8.5Z' fill='#222'/></svg><svg style='left:774px;top:302.5px' width='14' height='12'><path d='M6,3.5 L8.5,6 L6,8.5Z' fill='#222'/></svg><div class='a' style='left:419px;top:302.5px;width:191px;height:10.5px;border:1px solid #a4a4a4;border-radius:2px;background:linear-gradient(#f4f4f4,#dedede)'></div><svg style='left:511px;top:305px' width='8' height='6'><path d='M1.5,0 L1.5,5.5 M3.5,0 L3.5,5.5 M5.5,0 L5.5,5.5' stroke='#333' stroke-width='0.9'/></svg></body></html>
